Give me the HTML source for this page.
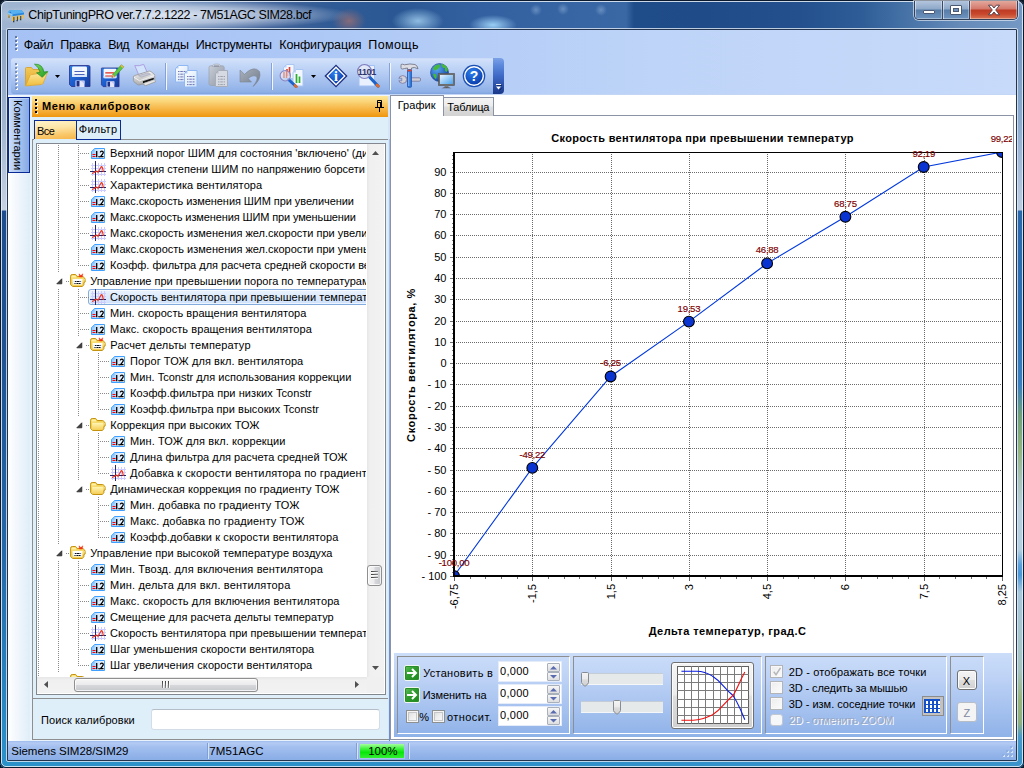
<!DOCTYPE html>
<html lang="ru"><head><meta charset="utf-8"><title>ChipTuningPRO</title>
<style>
html,body{margin:0;padding:0}
body{width:1024px;height:768px;overflow:hidden;position:relative;background:#1e4f90;font-family:"Liberation Sans",sans-serif;font-size:11px;color:#000}
div,span,svg{position:absolute;box-sizing:border-box}
.t{white-space:pre;line-height:1;display:block}
svg{overflow:visible}
svg text{font-family:"Liberation Sans",sans-serif}

</style></head>
<body>
<div style="left:0px;top:0px;width:1024px;height:768px;background:#0b1626"></div>
<div style="left:0px;top:0px;width:1024px;height:768px;border-radius:7px 7px 6px 6px;background:radial-gradient(ellipse 17px 13px at 349px 21px,rgba(190,118,104,.6),rgba(190,118,104,0) 100%),radial-gradient(ellipse 26px 13px at 418px 21px,rgba(160,205,238,.85),rgba(160,205,238,0) 100%),radial-gradient(ellipse 24px 10px at 493px 25px,rgba(160,212,250,.95),rgba(160,212,250,0) 100%),radial-gradient(circle 6px at 536px 10px,rgba(140,175,215,.55),rgba(140,175,215,0) 100%),radial-gradient(circle 6px at 563px 9px,rgba(140,175,215,.55),rgba(140,175,215,0) 100%),radial-gradient(circle 6px at 601px 10px,rgba(140,175,215,.55),rgba(140,175,215,0) 100%),radial-gradient(ellipse 185px 15px at 168px 15px,rgba(232,238,246,.9),rgba(222,230,242,.62) 55%,rgba(200,212,230,0) 100%),linear-gradient(90deg,#a0b5d1 0,#9ab0ce 60px,#7f9bc2 130px,#5e7fb0 200px,#48699f 260px,#3b6097 300px,#2e5a95 335px,#2b5894 400px,#3360a0 480px,#3a68a5 626px,#1f4d8a 634px,#1f4c89 700px,#24518e 800px,#2d5c96 860px,#4874a8 910px,#668bb9 960px,#7599c4 1024px)"></div>
<div style="left:0px;top:30px;width:8px;height:738px;background:linear-gradient(180deg,#8da4c4 0,#9fb3cf 90px,#c6d2e2 180px,#1d4d8e 181px,#1f5293 320px,#2368a8 520px,#2a8cc6 700px,#2b91c9 738px);border-radius:0 0 0 6px"></div>
<div style="left:1016px;top:30px;width:8px;height:738px;background:linear-gradient(180deg,#7498c2 0,#8eaccf 90px,#bccde1 180px,#2a68ac 181px,#2f74b6 300px,#3a80c0 355px,#6fa07a 385px,#92b47e 420px,#a8c4b8 450px,#b9d0dc 480px,#b4d0e0 520px,#5aa0dc 535px,#4a98d8 545px,#a8c8dc 562px,#a8c4c0 640px,#98b47c 670px,#90b080 693px,#4a9acb 707px,#2f8fc8 738px);border-radius:0 0 6px 0"></div>
<div style="left:0px;top:760px;width:1024px;height:8px;background:linear-gradient(90deg,#2b91c9 0,#2d8fc8 400px,#3a93cb 1024px);border-radius:0 0 6px 6px"></div>
<div style="left:0px;top:0px;width:1024px;height:768px;border:1px solid #0b1a2f;border-radius:7px 7px 6px 6px"></div>
<div style="left:1px;top:1px;width:1022px;height:766px;border:1px solid rgba(232,240,248,.85);border-radius:6px 6px 5px 5px"></div>
<div style="left:6px;top:28px;width:1012px;height:734px;border:1px solid rgba(225,234,245,.8);border-radius:2px"></div>
<div style="left:7px;top:29px;width:1010px;height:732px;border:1px solid #22344e;border-radius:1px;background:#a9c4f5"></div>
<svg style="left:4px;top:4px" width="24" height="22" viewBox="4 4 24 22"><path d="M13.700 17v5.300M17.200 16.500v4.700M20.600 16v4.200" stroke="#2e3436" stroke-width="1.300"/><path d="M8.500 14v3.800M12.700 16v5M16.100 15.500v4.500M19.500 15v4.300M23.100 14.400v4" stroke="#f4be3e" stroke-width="1.500"/><path d="M9 15.500v2.500" stroke="#50503a" stroke-width=".8"/><path d="M7.900 12.300 L9.800 10.300 Q10 10.100 10.500 10.100 L20.800 10.100 Q21.300 10.100 21.700 10.500 L24 12.700 L24 14.600 L12.400 16.200 L7.900 14.100Z" fill="#2a86dc"/><path d="M7.900 12.300 L9.800 10.300 Q10 10.100 10.500 10.100 L20.800 10.100 Q21.300 10.100 21.700 10.500 L24 12.700 L12.600 14.300Z" fill="#58b0ee"/><path d="M7.900 12.300 L12.600 14.300 L12.400 16.200 L7.900 14.100Z" fill="#8ccaf4"/><ellipse cx="10.400" cy="12.300" rx=".8" ry=".5" fill="#1264d0"/></svg>
<span class="t" style="left:28.30px;top:9.00px;font-size:12.5px;letter-spacing:-0.410px;">ChipTuningPRO ver.7.7.2.1222 - 7M51AGC SIM28.bcf</span>
<div style="left:914px;top:1px;width:104px;height:19px;border:1px solid #31415c;border-top:none;border-radius:0 0 5px 5px;overflow:hidden;box-shadow:0 0 0 1px rgba(255,255,255,.55)"><div style="left:0;top:0;width:28px;height:18px;background:linear-gradient(180deg,#b3c5dd 0,#8ea8c8 8px,#577ca8 9px,#6e94bf 18px);border-right:1px solid #384a66;box-shadow:inset 1px 0 0 rgba(255,255,255,.5),inset -1px -1px 0 rgba(255,255,255,.35)"></div><div style="left:28px;top:0;width:27px;height:18px;background:linear-gradient(180deg,#b3c5dd 0,#8ea8c8 8px,#577ca8 9px,#6e94bf 18px);border-right:1px solid #384a66;box-shadow:inset 1px 0 0 rgba(255,255,255,.5),inset -1px -1px 0 rgba(255,255,255,.35)"></div><div style="left:55px;top:0;width:47px;height:18px;background:linear-gradient(180deg,#e3a89d 0,#d4786a 8px,#bd3a24 9px,#c8472c 13px,#d97555 18px);box-shadow:inset 1px 0 0 rgba(255,255,255,.45),inset -1px -1px 0 rgba(255,255,255,.35)"></div></div>
<div style="left:923px;top:10px;width:12px;height:4px;background:#fff;border:1px solid #4b5a72;border-radius:1px"></div>
<div style="left:950px;top:5px;width:12px;height:10px;border:1px solid #4b5a72;border-radius:1px;background:#fff"></div>
<div style="left:953px;top:8px;width:6px;height:4px;border:1px solid #4b5a72;background:#6f90b9"></div>
<svg style="left:987px;top:4px" width="14" height="12" viewBox="0 0 14 12"><path d="M1.500 1.200h3.200L7 4l2.300-2.800h3.200L8.700 6l3.800 4.800H9.300L7 8 4.700 10.800H1.500L5.300 6Z" fill="#fff" stroke="#4a3a44" stroke-width=".9"/></svg>
<div style="left:8px;top:30px;width:1008px;height:66px;background:linear-gradient(90deg,#a6c2f5 0,#adc8f6 300px,#bed4f8 650px,#c7dafa 1008px)"></div>
<div style="left:15px;top:36px;width:4px;height:17px;"><div style="left:1px;top:1px;width:2px;height:2px;background:#fff"></div><div style="left:0;top:0px;width:2px;height:2px;background:#6078a8"></div><div style="left:1px;top:5px;width:2px;height:2px;background:#fff"></div><div style="left:0;top:4px;width:2px;height:2px;background:#6078a8"></div><div style="left:1px;top:9px;width:2px;height:2px;background:#fff"></div><div style="left:0;top:8px;width:2px;height:2px;background:#6078a8"></div><div style="left:1px;top:13px;width:2px;height:2px;background:#fff"></div><div style="left:0;top:12px;width:2px;height:2px;background:#6078a8"></div></div>
<span class="t" style="left:23.80px;top:39.00px;font-size:12.5px;letter-spacing:-0.345px;">Файл</span>
<span class="t" style="left:60.30px;top:39.00px;font-size:12.5px;letter-spacing:-0.307px;">Правка</span>
<span class="t" style="left:108.30px;top:39.00px;font-size:12.5px;letter-spacing:-0.713px;">Вид</span>
<span class="t" style="left:136.30px;top:39.00px;font-size:12.5px;letter-spacing:-0.045px;">Команды</span>
<span class="t" style="left:195.80px;top:39.00px;font-size:12.5px;letter-spacing:-0.175px;">Инструменты</span>
<span class="t" style="left:279.30px;top:39.00px;font-size:12.5px;letter-spacing:-0.154px;">Конфигурация</span>
<span class="t" style="left:368.30px;top:39.00px;font-size:12.5px;letter-spacing:0.384px;">Помощь</span>
<div style="left:8px;top:741px;width:1008px;height:19px;background:linear-gradient(180deg,#9dbbee 0,#b4cbf3 2px,#a3bfef 6px,#89ade6 19px)"></div>
<span class="t" style="left:11.30px;top:746.00px;font-size:11.5px;letter-spacing:-0.023px;">Siemens SIM28/SIM29</span>
<span class="t" style="left:209.30px;top:746.00px;font-size:11.5px;letter-spacing:0.085px;">7M51AGC</span>
<div style="left:207px;top:743px;width:1px;height:16px;background:#7f9fd6;box-shadow:1px 0 0 #d6e4fa"></div>
<div style="left:356px;top:743px;width:1px;height:16px;background:#7f9fd6;box-shadow:1px 0 0 #d6e4fa"></div>
<div style="left:359px;top:743px;width:46px;height:16px;background:linear-gradient(180deg,#a4ff9e 0,#3cf23a 35%,#08e608 60%,#34ee34 100%);border:1px solid #a8c2ec"></div>
<span class="t" style="left:368.30px;top:746.00px;font-size:11.5px;letter-spacing:-0.074px;">100%</span>
<div style="left:408px;top:743px;width:1px;height:16px;background:#7f9fd6;box-shadow:1px 0 0 #d6e4fa"></div>
<div style="left:1002px;top:746px;width:12px;height:12px;"><div style="left:9px;top:1px;width:2px;height:2px;background:#d6e4fa"></div><div style="left:8px;top:0px;width:2px;height:2px;background:#8eaee2"></div><div style="left:5px;top:5px;width:2px;height:2px;background:#d6e4fa"></div><div style="left:4px;top:4px;width:2px;height:2px;background:#8eaee2"></div><div style="left:9px;top:5px;width:2px;height:2px;background:#d6e4fa"></div><div style="left:8px;top:4px;width:2px;height:2px;background:#8eaee2"></div><div style="left:1px;top:9px;width:2px;height:2px;background:#d6e4fa"></div><div style="left:0px;top:8px;width:2px;height:2px;background:#8eaee2"></div><div style="left:5px;top:9px;width:2px;height:2px;background:#d6e4fa"></div><div style="left:4px;top:8px;width:2px;height:2px;background:#8eaee2"></div><div style="left:9px;top:9px;width:2px;height:2px;background:#d6e4fa"></div><div style="left:8px;top:8px;width:2px;height:2px;background:#8eaee2"></div></div>
<div style="left:11px;top:58px;width:482px;height:36px;border-radius:3px 0 0 3px;background:linear-gradient(180deg,#c3d6f7 0,#d3e1fa 1px,#c6d9f8 6px,#b2caf2 17px,#9dbbec 27px,#8eb0e8 34px,#7fa2dd 36px)"></div>
<div style="left:493px;top:58px;width:11px;height:36px;border-radius:0 4px 4px 0;background:linear-gradient(180deg,#7ba1e6 0,#5a86da 8px,#3f69c6 18px,#26499f 30px,#1c3a8c 35px)"></div>
<svg style="left:495px;top:83px" width="8" height="8" viewBox="0 0 8 8"><path d="M1 1.500h5" stroke="#fff" stroke-width="1"/><path d="M1 3.500h5L3.500 6.500Z" fill="#fff"/><path d="M2 2.500h5M7 4.500L4.500 7.500" stroke="#0a1a50" stroke-width="1" fill="none" opacity=".7"/></svg>
<div style="left:15px;top:63px;width:4px;height:28px;"><div style="left:1px;top:1px;width:2px;height:2px;background:#fff"></div><div style="left:0;top:0px;width:2px;height:2px;background:#7a90c0"></div><div style="left:1px;top:5px;width:2px;height:2px;background:#fff"></div><div style="left:0;top:4px;width:2px;height:2px;background:#7a90c0"></div><div style="left:1px;top:9px;width:2px;height:2px;background:#fff"></div><div style="left:0;top:8px;width:2px;height:2px;background:#7a90c0"></div><div style="left:1px;top:13px;width:2px;height:2px;background:#fff"></div><div style="left:0;top:12px;width:2px;height:2px;background:#7a90c0"></div><div style="left:1px;top:17px;width:2px;height:2px;background:#fff"></div><div style="left:0;top:16px;width:2px;height:2px;background:#7a90c0"></div><div style="left:1px;top:21px;width:2px;height:2px;background:#fff"></div><div style="left:0;top:20px;width:2px;height:2px;background:#7a90c0"></div><div style="left:1px;top:25px;width:2px;height:2px;background:#fff"></div><div style="left:0;top:24px;width:2px;height:2px;background:#7a90c0"></div></div>
<div style="left:165px;top:63px;width:1px;height:27px;background:#86a1d2"></div>
<div style="left:166px;top:63px;width:1px;height:27px;background:#f4f8fe"></div>
<div style="left:271px;top:63px;width:1px;height:27px;background:#86a1d2"></div>
<div style="left:272px;top:63px;width:1px;height:27px;background:#f4f8fe"></div>
<div style="left:389px;top:63px;width:1px;height:27px;background:#86a1d2"></div>
<div style="left:390px;top:63px;width:1px;height:27px;background:#f4f8fe"></div>
<svg style="left:55px;top:75px" width="5" height="3" viewBox="0 0 5 3"><path d="M0 0h5L2.500 3Z" fill="#000"/></svg>
<svg style="left:311px;top:75px" width="5" height="3" viewBox="0 0 5 3"><path d="M0 0h5L2.500 3Z" fill="#000"/></svg>
<svg width="0" height="0" style="left:0;top:0"><defs><linearGradient id="gFold" x1="0" y1="0" x2="0" y2="1"><stop offset="0" stop-color="#fdeaa0"/><stop offset="1" stop-color="#f0bc3c"/></linearGradient><linearGradient id="gFoldB" x1="0" y1="0" x2="0" y2="1"><stop offset="0" stop-color="#f3c958"/><stop offset="1" stop-color="#e2a62a"/></linearGradient><linearGradient id="gGreen" x1="0" y1="0" x2="1" y2="1"><stop offset="0" stop-color="#7ada5a"/><stop offset="1" stop-color="#1c9a22"/></linearGradient><linearGradient id="gFlop" x1="0" y1="0" x2="1" y2="1"><stop offset="0" stop-color="#2f7fe6"/><stop offset=".5" stop-color="#1c5ccc"/><stop offset="1" stop-color="#173a96"/></linearGradient><linearGradient id="gPrn" x1="0" y1="0" x2="0" y2="1"><stop offset="0" stop-color="#f4f4f4"/><stop offset="1" stop-color="#a9a9a9"/></linearGradient><linearGradient id="gGray" x1="0" y1="0" x2="1" y2="1"><stop offset="0" stop-color="#c9ced6"/><stop offset="1" stop-color="#8f98a6"/></linearGradient><linearGradient id="gDoc" x1="0" y1="0" x2="1" y2="1"><stop offset="0" stop-color="#ffffff"/><stop offset="1" stop-color="#cfe2fb"/></linearGradient><radialGradient id="gInfo" cx=".4" cy=".3" r=".8"><stop offset="0" stop-color="#2f80ee"/><stop offset="1" stop-color="#0636a6"/></radialGradient><radialGradient id="gGlobe" cx=".35" cy=".3" r=".8"><stop offset="0" stop-color="#5aa8f4"/><stop offset="1" stop-color="#0c3c9a"/></radialGradient><linearGradient id="gMon" x1="0" y1="0" x2="1" y2="1"><stop offset="0" stop-color="#e8f4ff"/><stop offset="1" stop-color="#4aa2ee"/></linearGradient><linearGradient id="gLens" x1="0" y1="0" x2="1" y2="1"><stop offset="0" stop-color="#f4f8ff" stop-opacity=".85"/><stop offset="1" stop-color="#b8c8e8" stop-opacity=".7"/></linearGradient><linearGradient id="gBtn" x1="0" y1="0" x2="0" y2="1"><stop offset="0" stop-color="#f4f4f4"/><stop offset=".48" stop-color="#ebebeb"/><stop offset=".52" stop-color="#dcdcdc"/><stop offset="1" stop-color="#cfcfcf"/></linearGradient><linearGradient id="gN" x1="0" y1="0" x2="1" y2="0"><stop offset="0" stop-color="#8cc6ff"/><stop offset=".5" stop-color="#d4eaff"/><stop offset="1" stop-color="#f4faff"/></linearGradient><linearGradient id="gGray2" x1="0" y1="0" x2="1" y2="1"><stop offset="0" stop-color="#a9b1bd"/><stop offset="1" stop-color="#707a88"/></linearGradient><linearGradient id="gFold2" x1="0" y1="0" x2="0" y2="1"><stop offset="0" stop-color="#fff6b8"/><stop offset="1" stop-color="#f6cf5a"/></linearGradient></defs></svg>
<svg style="left:24px;top:63px" width="25" height="25" viewBox="0 0 25 25"><path d="M1.500 5.500 Q1.500 4.500 2.500 4.500 L7.500 4.500 L9 6.500 L16 6.500 L16 20 L1.500 22.500Z" fill="url(#gFoldB)" stroke="#d49c24" stroke-width=".8"/><path d="M1.500 23 L6 12.500 Q6.400 11.800 7.500 11.600 L23.500 9.200 L19 20.500 Q18.700 21.300 17.500 21.500 Z" fill="url(#gFold)" stroke="#dca832" stroke-width=".8"/><path d="M10.500 1.200 Q18.500 0.500 19.800 9 L23.800 8.600 L18.300 14.300 L12.600 9.800 L16.200 9.400 Q15 4.200 10.500 1.200Z" fill="url(#gGreen)" stroke="#1c8a20" stroke-width=".7"/></svg>
<svg style="left:69px;top:65px" width="22" height="23" viewBox="0 0 22 23"><path d="M1 .5 H19.500 Q21 .5 21 2 V21.500 H2.500 L.5 19.500 V1 Q.5 .5 1 .5Z" fill="url(#gFlop)" stroke="#2a2f86" stroke-width=".8"/><rect x="3" y="1.500" width="15" height="10.500" rx="1.200" fill="#f2f7ff"/><rect x="3" y="9.500" width="15" height="2.500" fill="#d5e4fb"/><path d="M5.500 6.500h10M5.500 9.500h10" stroke="#4a63b8" stroke-width="1"/><rect x="6.500" y="15.500" width="9" height="6.500" fill="#e4e6fa"/><rect x="7.500" y="16" width="3" height="5.500" fill="#1d2f86"/><path d="M12 16h3.500v3Z" fill="#c0c4f0"/></svg>
<svg style="left:101px;top:64px" width="24" height="24" viewBox="0 0 24 24"><g transform="translate(0,3.500) scale(.86,.89)"><path d="M1 .5 H19.500 Q21 .5 21 2 V21.500 H2.500 L.5 19.500 V1 Q.5 .5 1 .5Z" fill="url(#gFlop)" stroke="#2a2f86" stroke-width=".8"/><rect x="3" y="1.500" width="15" height="10.500" rx="1.200" fill="#f2f7ff"/><rect x="3" y="9.500" width="15" height="2.500" fill="#d5e4fb"/><path d="M5 6h10M5 9.500h10" stroke="#e02a1a" stroke-width="1.300"/><rect x="6.500" y="15.500" width="9" height="6.500" fill="#e4e6fa"/><rect x="7.500" y="16" width="3" height="5.500" fill="#1d2f86"/><path d="M12 16h3.500v3Z" fill="#c0c4f0"/></g><path d="M20.300 .8 L22.800 2.800 L14 12.600 L11.600 10.600Z" fill="#5cc840" stroke="#2c8a22" stroke-width=".5"/><path d="M20.300 .8 L22.800 2.800 L21.900 3.900 L19.400 1.900Z" fill="#f2b444"/><path d="M14 12.600 L11.600 10.600 L10.800 13.600Z" fill="#f2c27a" stroke="#b07a30" stroke-width=".4"/><path d="M10.800 13.600l.3-1.200 .9 .7Z" fill="#222"/></svg>
<svg style="left:133px;top:64px" width="24" height="23" viewBox="0 0 24 23"><path d="M1.800 1.600 Q6 2.400 10.700 .4 L14.200 8.500 L5.600 10.600Z" fill="#d2e3fc" stroke="#a999dc" stroke-width=".9"/><path d="M.4 13 Q.3 12 1.500 11.600 L15.800 7.200 Q17 6.900 18 7.600 L21 10 Q21.700 10.600 21.700 11.500 V16.500 L22.800 17.600 L12.500 21.700 L10 19.900 L6.200 21 Q5.400 21.200 4.600 20.600 L1 17.800 Q.4 17.300 .4 16.500Z" fill="url(#gPrn)" stroke="#8e8e8e" stroke-width=".7"/><path d="M5.500 11.600 L15 8.700 L17.500 10.300 L8.300 13.300Z" fill="#c4c6d4" stroke="#9a9aae" stroke-width=".5"/><path d="M1 13.200 L6.500 16.800 L21.300 11.600" fill="none" stroke="#fafafa" stroke-width=".8"/><path d="M9.800 17.200 L20.800 13.700 V15.400 L10 19.300Z" fill="#151515"/><path d="M10.200 19.600 L21.300 15.800 L22.600 17.500 L12.500 21.400Z" fill="#e9e9e9" stroke="#9a9a9a" stroke-width=".4"/></svg>
<svg style="left:175px;top:65px" width="23" height="23" viewBox="0 0 23 23"><path d="M3.5 0.5 H13.0 V17.0 H0.5 V3.5Z" fill="url(#gDoc)" stroke="#8fb8f2" stroke-width="1"/><path d="M0.5 3.5 L3.5 0.5 V3.5Z" fill="#8fb8f2" opacity=".7"/><path d="M3.0 6.5h7.5" stroke="#4a4f9a" stroke-width=".9" stroke-dasharray="1.500 .8 2.500 .8 2 .8" opacity=".85"/><path d="M3.0 9.2h7.5" stroke="#4a4f9a" stroke-width=".9" stroke-dasharray="1.500 .8 2.500 .8 2 .8" opacity=".85"/><path d="M3.0 11.9h7.5" stroke="#4a4f9a" stroke-width=".9" stroke-dasharray="1.500 .8 2.500 .8 2 .8" opacity=".85"/><path d="M3.0 14.600000000000001h7.5" stroke="#4a4f9a" stroke-width=".9" stroke-dasharray="1.500 .8 2.500 .8 2 .8" opacity=".85"/><path d="M12.5 5.5 H22.0 V22.0 H9.5 V8.5Z" fill="url(#gDoc)" stroke="#8fb8f2" stroke-width="1"/><path d="M9.5 8.5 L12.5 5.5 V8.5Z" fill="#8fb8f2" opacity=".7"/><path d="M12.0 11.5h7.5" stroke="#4a4f9a" stroke-width=".9" stroke-dasharray="1.500 .8 2.500 .8 2 .8" opacity=".85"/><path d="M12.0 14.2h7.5" stroke="#4a4f9a" stroke-width=".9" stroke-dasharray="1.500 .8 2.500 .8 2 .8" opacity=".85"/><path d="M12.0 16.9h7.5" stroke="#4a4f9a" stroke-width=".9" stroke-dasharray="1.500 .8 2.500 .8 2 .8" opacity=".85"/><path d="M12.0 19.6h7.5" stroke="#4a4f9a" stroke-width=".9" stroke-dasharray="1.500 .8 2.500 .8 2 .8" opacity=".85"/></svg>
<svg style="left:208px;top:63px" width="21" height="25" viewBox="0 0 21 25"><path d="M1 4.500 Q1 2.800 2.800 2.800 H14.500 Q16.200 2.800 16.200 4.500 V20.500 Q16.200 22.500 14.500 22.500 H2.800 Q1 22.500 1 20.500Z" fill="url(#gGray)" stroke="#9aa2b0" stroke-width=".7"/><path d="M4.500 3.500 Q4.500 1 8.600 1 Q12.700 1 12.700 3.500Z" fill="#d4d8e0" stroke="#9aa2b0" stroke-width=".6"/><path d="M6 3h5.200" stroke="#7c8494" stroke-width="1"/><path d="M10.5 7.5 H19.5 V23.5 H7.5 V10.5Z" fill="#d6dae2" stroke="#a8aeb9" stroke-width="1"/><path d="M7.5 10.5 L10.5 7.5 V10.5Z" fill="#a8aeb9" opacity=".7"/><path d="M10.0 13.5h7" stroke="#8a909c" stroke-width=".9" stroke-dasharray="1.500 .8 2.500 .8 2 .8" opacity=".85"/><path d="M10.0 16.2h7" stroke="#8a909c" stroke-width=".9" stroke-dasharray="1.500 .8 2.500 .8 2 .8" opacity=".85"/><path d="M10.0 18.9h7" stroke="#8a909c" stroke-width=".9" stroke-dasharray="1.500 .8 2.500 .8 2 .8" opacity=".85"/><path d="M10.0 21.6h7" stroke="#8a909c" stroke-width=".9" stroke-dasharray="1.500 .8 2.500 .8 2 .8" opacity=".85"/></svg>
<svg style="left:239px;top:66px" width="23" height="22" viewBox="0 0 23 22"><path d="M1 4 L1 16 L12.500 16 L9.200 12.600 Q13.500 8.500 17.500 10.500 Q19.500 13.500 14 20.500 Q23 13 20.500 5.500 Q15 -1 5.500 8.300Z" fill="url(#gGray2)" stroke="#7d8794" stroke-width=".6"/></svg>
<svg style="left:279px;top:63px" width="26" height="26" viewBox="0 0 26 26"><path d="M7.5 1.5 H15.0 V15.5 H4.5 V4.5Z" fill="#f1f6ff" stroke="#a9c6f2" stroke-width="1"/><path d="M4.5 4.5 L7.5 1.5 V4.5Z" fill="#a9c6f2" opacity=".7"/><path d="M7.0 7.5h5.5" stroke="#f1f6ff" stroke-width=".9" stroke-dasharray="1.500 .8 2.500 .8 2 .8" opacity=".85"/><path d="M7.0 10.2h5.5" stroke="#f1f6ff" stroke-width=".9" stroke-dasharray="1.500 .8 2.500 .8 2 .8" opacity=".85"/><path d="M7.0 12.9h5.5" stroke="#f1f6ff" stroke-width=".9" stroke-dasharray="1.500 .8 2.500 .8 2 .8" opacity=".85"/><path d="M8 6v7M10.500 4v9" stroke="#e0402a" stroke-width="1.600"/><path d="M17 6.5 H24 V23.0 H14 V9.5Z" fill="#f1f6ff" stroke="#a9c6f2" stroke-width="1"/><path d="M14 9.5 L17 6.5 V9.5Z" fill="#a9c6f2" opacity=".7"/><path d="M16.5 12.5h5" stroke="#f1f6ff" stroke-width=".9" stroke-dasharray="1.500 .8 2.500 .8 2 .8" opacity=".85"/><path d="M16.5 15.2h5" stroke="#f1f6ff" stroke-width=".9" stroke-dasharray="1.500 .8 2.500 .8 2 .8" opacity=".85"/><path d="M16.5 17.9h5" stroke="#f1f6ff" stroke-width=".9" stroke-dasharray="1.500 .8 2.500 .8 2 .8" opacity=".85"/><path d="M16.5 20.6h5" stroke="#f1f6ff" stroke-width=".9" stroke-dasharray="1.500 .8 2.500 .8 2 .8" opacity=".85"/><path d="M17.500 11v9M20.500 13.500v6.500" stroke="#2fae2c" stroke-width="1.700"/><path d="M9.500 16.500 L17 23.500" stroke="#1c62c8" stroke-width="3" stroke-linecap="round"/><path d="M16 22.500 L17.300 23.700" stroke="#e06a2a" stroke-width="2.600" stroke-linecap="round"/><circle cx="6.300" cy="12.800" r="5.200" fill="url(#gLens)" stroke="#8a86c4" stroke-width="1.100"/><path d="M5 9v6M7.500 8v7" stroke="#e0705a" stroke-width="1.500" opacity=".7"/></svg>
<svg style="left:324px;top:64px" width="24" height="24" viewBox="0 0 24 24"><path d="M12 .4 L23.600 12 L12 23.600 L.4 12Z" fill="#1b2f86"/><path d="M12 2.300 L21.700 12 L12 21.700 L2.300 12Z" fill="#fff"/><path d="M12 4.200 L19.800 12 L12 19.800 L4.200 12Z" fill="url(#gInfo)"/><text x="12" y="17" font-size="14" font-weight="bold" style="font-family:Liberation Serif,serif" fill="#fff" text-anchor="middle">i</text></svg>
<svg style="left:356px;top:63px" width="26" height="26" viewBox="0 0 26 26"><path d="M6 2.5 H18.5 V23.0 H3 V5.5Z" fill="#e9f1fe" stroke="#a2c0f2" stroke-width="1"/><path d="M3 5.5 L6 2.5 V5.5Z" fill="#a2c0f2" opacity=".7"/><path d="M5.5 8.5h10.5" stroke="#e9f1fe" stroke-width=".9" stroke-dasharray="1.500 .8 2.500 .8 2 .8" opacity=".85"/><path d="M5.5 11.2h10.5" stroke="#e9f1fe" stroke-width=".9" stroke-dasharray="1.500 .8 2.500 .8 2 .8" opacity=".85"/><path d="M5.5 13.9h10.5" stroke="#e9f1fe" stroke-width=".9" stroke-dasharray="1.500 .8 2.500 .8 2 .8" opacity=".85"/><path d="M5.5 16.6h10.5" stroke="#e9f1fe" stroke-width=".9" stroke-dasharray="1.500 .8 2.500 .8 2 .8" opacity=".85"/><path d="M13.500 14 L22 23" stroke="#1c62c8" stroke-width="3.200" stroke-linecap="round"/><path d="M21 22 L22.300 23.300" stroke="#e06a2a" stroke-width="2.800" stroke-linecap="round"/><circle cx="8.500" cy="8.500" r="7" fill="url(#gLens)" stroke="#7f7cbc" stroke-width="1.200"/><text x="1.800" y="12" font-size="9" font-weight="bold" fill="#30346c" textLength="18.500" lengthAdjust="spacing">1101</text></svg>
<svg style="left:398px;top:63px" width="24" height="26" viewBox="0 0 24 26"><rect x="6" y="14.800" width="16.500" height="3.400" rx="1.200" fill="#cdcdd6" stroke="#75729c" stroke-width=".8"/><circle cx="4.700" cy="16.500" r="3.900" fill="#d2d2da" stroke="#75729c" stroke-width=".8"/><rect x="-.5" y="15.200" width="4.300" height="2.600" fill="#a8c2ee"/><path d="M.6 15.200H3.800V17.800H.6" fill="none" stroke="#75729c" stroke-width=".7"/><path d="M3 2.500 Q2.500 1 4.500 1.200 L6.500 1.800 Q12 .3 17 1.500 Q19.500 2.500 20 5.800 Q16 3.500 13.500 5 V6.800 H9.500 V5 L6.500 5.500 L4.500 6 Q2.800 6 3 4.500Z" fill="#dcdce4" stroke="#6c6c7c" stroke-width=".8"/><rect x="9.500" y="6.800" width="4" height="17.500" rx=".8" fill="#2f78dc" stroke="#1a4aa0" stroke-width=".7"/><rect x="9.500" y="6.800" width="4" height="1.600" fill="#e2452c"/><path d="M10.800 9v14" stroke="#8cc0ff" stroke-width="1"/></svg>
<svg style="left:430px;top:63px" width="25" height="26" viewBox="0 0 25 26"><circle cx="9.500" cy="9.500" r="9" fill="url(#gGlobe)" stroke="#1a3c8c" stroke-width=".6"/><path d="M3 5 Q5 2 9 1.200 Q11 3 9 5 Q7.500 6.500 5 7.500 Q3.500 7 3 5ZM11 1 Q15 1 17.500 5 Q18.500 8 16 9 Q14 7 15 5 Q13 5.500 12 3.500ZM3 11 Q5 10 6.500 12 Q7 15 5.500 16 Q3.500 14 3 11Z" fill="#46b83a"/><rect x="8.500" y="10.500" width="16" height="12" fill="#6e6e6e" stroke="#505050" stroke-width=".6"/><rect x="10" y="12" width="13" height="9" fill="url(#gMon)"/><path d="M14.500 22.500h4v1.500h-4Z" fill="#7a7a7a"/><path d="M11.500 25.200 Q16.500 23 21.500 25.200Z" fill="#5a5a5a"/></svg>
<svg style="left:462px;top:64px" width="24" height="24" viewBox="0 0 24 24"><circle cx="12" cy="12" r="11.300" fill="#1a4fb4"/><circle cx="12" cy="12" r="10" fill="#fff"/><circle cx="12" cy="12" r="8.600" fill="url(#gInfo)"/><text x="12" y="17" font-size="14" font-weight="bold" fill="#fff" text-anchor="middle">?</text></svg>
<div style="left:8px;top:96px;width:24px;height:645px;background:linear-gradient(90deg,#ffffff 0,#f3f8fd 8px,#deedf8 23px,#cddcf8 24px)"></div>
<div style="left:8px;top:95px;width:382px;height:1px;background:#f0f6fe"></div>
<div style="left:390px;top:94px;width:626px;height:1px;background:#c3d6f6"></div>
<div style="left:8px;top:97px;width:22px;height:76px;border:1px solid #0a2a96;background:linear-gradient(90deg,#cadcf8 0,#a9c5f0 10px,#86aae4 20px);box-shadow:inset 1px 1px 0 rgba(255,255,255,.35)"></div>
<div style="left:22px;top:100px;width:0;height:0;transform:rotate(90deg);transform-origin:0 0"><span class="t" style="left:0.00px;top:-1.00px;font-size:11px;letter-spacing:0.090px;">Комментарии</span></div>
<div style="left:30px;top:96px;width:2px;height:645px;background:#e8f2fc"></div>
<div style="left:32px;top:96px;width:358px;height:645px;background:#dfeffa"></div>
<div style="left:32px;top:96px;width:356px;height:21px;background:linear-gradient(180deg,#fde89a 0,#fbd77c 5px,#f7bd52 11px,#f3a62a 17px,#f0960e 21px)"></div>
<div style="left:35px;top:99px;width:4px;height:16px;"><div style="left:1px;top:1px;width:2px;height:2px;background:#fff6d8"></div><div style="left:0;top:0px;width:2px;height:2px;background:#000"></div><div style="left:1px;top:5px;width:2px;height:2px;background:#fff6d8"></div><div style="left:0;top:4px;width:2px;height:2px;background:#000"></div><div style="left:1px;top:9px;width:2px;height:2px;background:#fff6d8"></div><div style="left:0;top:8px;width:2px;height:2px;background:#000"></div><div style="left:1px;top:13px;width:2px;height:2px;background:#fff6d8"></div><div style="left:0;top:12px;width:2px;height:2px;background:#000"></div></div>
<span class="t" style="left:42.00px;top:101.00px;font-size:11px;font-weight:bold;letter-spacing:0.634px;">Меню калибровок</span>
<svg style="left:374px;top:99px" width="12" height="14" viewBox="0 0 12 14"><path d="M3.500 8V1.500h4V8M3.500 3.500h4M6.500 4v4M1 8.500h9M5.500 9v4" fill="none" stroke="#000" stroke-width="1"/></svg>
<div style="left:34px;top:120px;width:43px;height:19px;border:1px solid #0a2a96;border-bottom:none;background:linear-gradient(175deg,#fff4cc 0,#fde4a4 40%,#f9c768 75%,#f7b64c 100%)"></div>
<span class="t" style="left:36.90px;top:126.00px;font-size:11px;letter-spacing:-0.534px;">Все</span>
<div style="left:76px;top:120px;width:45px;height:20px;border:1px solid #0a2a96;background:#dfeffa"></div>
<span class="t" style="left:78.80px;top:124.00px;font-size:11px;letter-spacing:0.249px;">Фильтр</span>
<div style="left:32px;top:139px;width:357px;height:560px;border:1px solid #8e8e8e;border-top:none"></div>
<div style="left:32px;top:139px;width:2px;height:1px;background:#8e8e8e"></div>
<div style="left:121px;top:139px;width:268px;height:1px;background:#8e8e8e"></div>
<div style="left:388px;top:96px;width:2px;height:645px;background:#d6e5f8"></div>
<div style="left:32px;top:699px;width:1px;height:41px;background:#8e8e8e"></div>
<div style="left:32px;top:739px;width:358px;height:1px;background:#8e8e8e"></div>
<div style="left:32px;top:740px;width:358px;height:1px;background:#e8f2fc"></div>
<div style="left:36px;top:143px;width:350px;height:552px;border:1px solid #828790;background:#fff"></div>
<div style="left:37px;top:144px;width:329px;height:533px;overflow:hidden"><div style="left:-37px;top:-144px;width:1024px;height:768px"><div style="left:38px;top:145px;width:1px;height:548px;background:repeating-linear-gradient(180deg,#8a8a8a 0 1px,transparent 1px 2px)"></div><div style="left:58px;top:145px;width:1px;height:128px;background:repeating-linear-gradient(180deg,#8a8a8a 0 1px,transparent 1px 2px)"></div><div style="left:58px;top:289px;width:1px;height:256px;background:repeating-linear-gradient(180deg,#8a8a8a 0 1px,transparent 1px 2px)"></div><div style="left:58px;top:561px;width:1px;height:112px;background:repeating-linear-gradient(180deg,#8a8a8a 0 1px,transparent 1px 2px)"></div><div style="left:78px;top:145px;width:1px;height:121px;background:repeating-linear-gradient(180deg,#8a8a8a 0 1px,transparent 1px 2px)"></div><div style="left:78px;top:289px;width:1px;height:48px;background:repeating-linear-gradient(180deg,#8a8a8a 0 1px,transparent 1px 2px)"></div><div style="left:78px;top:353px;width:1px;height:64px;background:repeating-linear-gradient(180deg,#8a8a8a 0 1px,transparent 1px 2px)"></div><div style="left:78px;top:433px;width:1px;height:48px;background:repeating-linear-gradient(180deg,#8a8a8a 0 1px,transparent 1px 2px)"></div><div style="left:78px;top:561px;width:1px;height:105px;background:repeating-linear-gradient(180deg,#8a8a8a 0 1px,transparent 1px 2px)"></div><div style="left:98px;top:353px;width:1px;height:57px;background:repeating-linear-gradient(180deg,#8a8a8a 0 1px,transparent 1px 2px)"></div><div style="left:98px;top:433px;width:1px;height:41px;background:repeating-linear-gradient(180deg,#8a8a8a 0 1px,transparent 1px 2px)"></div><div style="left:98px;top:497px;width:1px;height:41px;background:repeating-linear-gradient(180deg,#8a8a8a 0 1px,transparent 1px 2px)"></div><div style="left:88px;top:289px;width:300px;height:16px;border:1px solid #84acdd;border-radius:3px;background:linear-gradient(180deg,#eaf3fe 0,#cfe2fc 100%);box-shadow:inset 0 0 0 1px rgba(255,255,255,.6)"></div><div style="left:80px;top:153px;width:10px;height:1px;background:repeating-linear-gradient(90deg,#8a8a8a 0 1px,transparent 1px 2px)"></div><svg style="left:91px;top:148px" width="14" height="11" viewBox="0 0 14 11"><path d="M3.500 .5H13.500V10.500H.5V3.500Z" fill="url(#gN)" stroke="#3fa0ff" stroke-width="1"/><path d="M.5 3.500L3.500 .5V3.500Z" fill="#7cc0ff"/><rect x="1.500" y="6" width="3" height="1" fill="#f00"/><rect x="1.500" y="8" width="3" height="1" fill="#f00"/><path d="M5.700 3v6.300" stroke="#000" stroke-width="1.300"/><rect x="7.400" y="8" width="1.300" height="1.300" fill="#000"/><path d="M9.300 4.400Q9.500 3.200 10.800 3.200Q12.300 3.200 12.300 4.600Q12.300 5.600 9.500 8.700H12.600" fill="none" stroke="#000" stroke-width="1.250"/></svg><span class="t r0" style="left:110.10px;top:148.00px;font-size:11px;">Верхний порог ШИМ для состояния 'включено' (диагностика)</span><div style="left:80px;top:169px;width:10px;height:1px;background:repeating-linear-gradient(90deg,#8a8a8a 0 1px,transparent 1px 2px)"></div><svg style="left:90px;top:161px" width="16" height="16" viewBox="0 0 16 16"><path d="M2.500 2v13M5.500 2v13M8.500 2v13M11.500 2v13M14.500 2v13M1 4.500h15M1 7.500h15M1 10.500h15M1 13.500h15" stroke="#ccccff" stroke-width="1"/><path d="M5.500 0v16M0 10.500h16" stroke="#26266a" stroke-width="1"/><path d="M2 12.500Q4 12 5.500 10.500Q7 9.500 8 11.500Q9.500 9 11 6Q12 5 12.500 7L13.500 11" fill="none" stroke="#f03018" stroke-width="1.100"/></svg><span class="t r1" style="left:110.10px;top:164.00px;font-size:11px;letter-spacing:0.011px;">Коррекция степени ШИМ по напряжению борсети</span><div style="left:80px;top:185px;width:10px;height:1px;background:repeating-linear-gradient(90deg,#8a8a8a 0 1px,transparent 1px 2px)"></div><svg style="left:90px;top:177px" width="16" height="16" viewBox="0 0 16 16"><path d="M2.500 2v13M5.500 2v13M8.500 2v13M11.500 2v13M14.500 2v13M1 4.500h15M1 7.500h15M1 10.500h15M1 13.500h15" stroke="#ccccff" stroke-width="1"/><path d="M5.500 0v16M0 10.500h16" stroke="#26266a" stroke-width="1"/><path d="M2 12.500Q4 12 5.500 10.500Q7 9.500 8 11.500Q9.500 9 11 6Q12 5 12.500 7L13.500 11" fill="none" stroke="#f03018" stroke-width="1.100"/></svg><span class="t r2" style="left:110.10px;top:180.00px;font-size:11px;letter-spacing:0.101px;">Характеристика вентилятора</span><div style="left:80px;top:201px;width:10px;height:1px;background:repeating-linear-gradient(90deg,#8a8a8a 0 1px,transparent 1px 2px)"></div><svg style="left:91px;top:196px" width="14" height="11" viewBox="0 0 14 11"><path d="M3.500 .5H13.500V10.500H.5V3.500Z" fill="url(#gN)" stroke="#3fa0ff" stroke-width="1"/><path d="M.5 3.500L3.500 .5V3.500Z" fill="#7cc0ff"/><rect x="1.500" y="6" width="3" height="1" fill="#f00"/><rect x="1.500" y="8" width="3" height="1" fill="#f00"/><path d="M5.700 3v6.300" stroke="#000" stroke-width="1.300"/><rect x="7.400" y="8" width="1.300" height="1.300" fill="#000"/><path d="M9.300 4.400Q9.500 3.200 10.800 3.200Q12.300 3.200 12.300 4.600Q12.300 5.600 9.500 8.700H12.600" fill="none" stroke="#000" stroke-width="1.250"/></svg><span class="t r3" style="left:110.10px;top:196.00px;font-size:11px;letter-spacing:-0.065px;">Макс.скорость изменения ШИМ при увеличении</span><div style="left:80px;top:217px;width:10px;height:1px;background:repeating-linear-gradient(90deg,#8a8a8a 0 1px,transparent 1px 2px)"></div><svg style="left:91px;top:212px" width="14" height="11" viewBox="0 0 14 11"><path d="M3.500 .5H13.500V10.500H.5V3.500Z" fill="url(#gN)" stroke="#3fa0ff" stroke-width="1"/><path d="M.5 3.500L3.500 .5V3.500Z" fill="#7cc0ff"/><rect x="1.500" y="6" width="3" height="1" fill="#f00"/><rect x="1.500" y="8" width="3" height="1" fill="#f00"/><path d="M5.700 3v6.300" stroke="#000" stroke-width="1.300"/><rect x="7.400" y="8" width="1.300" height="1.300" fill="#000"/><path d="M9.300 4.400Q9.500 3.200 10.800 3.200Q12.300 3.200 12.300 4.600Q12.300 5.600 9.500 8.700H12.600" fill="none" stroke="#000" stroke-width="1.250"/></svg><span class="t r4" style="left:110.10px;top:212.00px;font-size:11px;letter-spacing:-0.124px;">Макс.скорость изменения ШИМ при уменьшении</span><div style="left:80px;top:233px;width:10px;height:1px;background:repeating-linear-gradient(90deg,#8a8a8a 0 1px,transparent 1px 2px)"></div><svg style="left:90px;top:225px" width="16" height="16" viewBox="0 0 16 16"><path d="M2.500 2v13M5.500 2v13M8.500 2v13M11.500 2v13M14.500 2v13M1 4.500h15M1 7.500h15M1 10.500h15M1 13.500h15" stroke="#ccccff" stroke-width="1"/><path d="M5.500 0v16M0 10.500h16" stroke="#26266a" stroke-width="1"/><path d="M2 12.500Q4 12 5.500 10.500Q7 9.500 8 11.500Q9.500 9 11 6Q12 5 12.500 7L13.500 11" fill="none" stroke="#f03018" stroke-width="1.100"/></svg><span class="t r5" style="left:110.10px;top:228.00px;font-size:11px;">Макс.скорость изменения жел.скорости при увеличении</span><div style="left:80px;top:249px;width:10px;height:1px;background:repeating-linear-gradient(90deg,#8a8a8a 0 1px,transparent 1px 2px)"></div><svg style="left:91px;top:244px" width="14" height="11" viewBox="0 0 14 11"><path d="M3.500 .5H13.500V10.500H.5V3.500Z" fill="url(#gN)" stroke="#3fa0ff" stroke-width="1"/><path d="M.5 3.500L3.500 .5V3.500Z" fill="#7cc0ff"/><rect x="1.500" y="6" width="3" height="1" fill="#f00"/><rect x="1.500" y="8" width="3" height="1" fill="#f00"/><path d="M5.700 3v6.300" stroke="#000" stroke-width="1.300"/><rect x="7.400" y="8" width="1.300" height="1.300" fill="#000"/><path d="M9.300 4.400Q9.500 3.200 10.800 3.200Q12.300 3.200 12.300 4.600Q12.300 5.600 9.500 8.700H12.600" fill="none" stroke="#000" stroke-width="1.250"/></svg><span class="t r6" style="left:110.10px;top:244.00px;font-size:11px;">Макс.скорость изменения жел.скорости при уменьшении</span><div style="left:80px;top:265px;width:10px;height:1px;background:repeating-linear-gradient(90deg,#8a8a8a 0 1px,transparent 1px 2px)"></div><svg style="left:91px;top:260px" width="14" height="11" viewBox="0 0 14 11"><path d="M3.500 .5H13.500V10.500H.5V3.500Z" fill="url(#gN)" stroke="#3fa0ff" stroke-width="1"/><path d="M.5 3.500L3.500 .5V3.500Z" fill="#7cc0ff"/><rect x="1.500" y="6" width="3" height="1" fill="#f00"/><rect x="1.500" y="8" width="3" height="1" fill="#f00"/><path d="M5.700 3v6.300" stroke="#000" stroke-width="1.300"/><rect x="7.400" y="8" width="1.300" height="1.300" fill="#000"/><path d="M9.300 4.400Q9.500 3.200 10.800 3.200Q12.300 3.200 12.300 4.600Q12.300 5.600 9.500 8.700H12.600" fill="none" stroke="#000" stroke-width="1.250"/></svg><span class="t r7" style="left:110.10px;top:260.00px;font-size:11px;">Коэфф. фильтра для расчета средней скорости вентилятора</span><svg style="left:56px;top:278px" width="7" height="7" viewBox="0 0 7 7"><path d="M5.800 .8V5.800H.8Z" fill="#404040" stroke="#262626" stroke-width=".8"/></svg><div style="left:66px;top:281px;width:4px;height:1px;background:repeating-linear-gradient(90deg,#8a8a8a 0 1px,transparent 1px 2px)"></div><svg style="left:70px;top:273px" width="16" height="16" viewBox="0 0 16 16"><path d="M.6 3.200Q.6 1.500 2.200 1.500H5Q6 1.500 6.500 2.300L7.200 3.500H12.500Q13.600 3.500 13.900 4.500L14.600 5.200Q15.100 5.600 15.100 6.300V9L13.900 9.600V11.600L12.400 13.500H2.600L.6 11.500Z" fill="#f3d258" stroke="#c4920e" stroke-width="1"/><path d="M1.500 3.200Q1.500 2.400 2.300 2.400H5Q5.600 2.400 5.900 3L6.500 4.500H2.200V10Z" fill="#fff2a6"/><path d="M2.300 5.800H13V11.300L12 12.600H2.900L1.900 11.300Z" fill="url(#gFold2)"/><path d="M13.700 5.500V8.600L14.300 8.300V6.300Z" fill="#fff6c0"/><rect x="3" y="6" width="9" height="5.500" fill="#fff"/><path d="M3.500 8.500h8M3.500 10.500h8" stroke="#a8c4f0" stroke-width="1" opacity=".7"/><path d="M5 8.500h1.500M7 8.500h2M9.500 8.500h1M4.500 10.500h1M6.500 10.500h2M9 10.500h1.500" stroke="#111" stroke-width="1"/><path d="M9 .8L9.500 4H12.300L12.800 .8L10.900 2.600Z" fill="#f5300f" stroke="#f5300f" stroke-width=".4"/></svg><span class="t r8" style="left:90.30px;top:276.00px;font-size:11px;">Управление при превышении порога по температурам</span><div style="left:80px;top:297px;width:10px;height:1px;background:repeating-linear-gradient(90deg,#8a8a8a 0 1px,transparent 1px 2px)"></div><svg style="left:90px;top:289px" width="16" height="16" viewBox="0 0 16 16"><path d="M2.500 2v13M5.500 2v13M8.500 2v13M11.500 2v13M14.500 2v13M1 4.500h15M1 7.500h15M1 10.500h15M1 13.500h15" stroke="#ccccff" stroke-width="1"/><path d="M5.500 0v16M0 10.500h16" stroke="#26266a" stroke-width="1"/><path d="M2 12.500Q4 12 5.500 10.500Q7 9.500 8 11.500Q9.500 9 11 6Q12 5 12.500 7L13.500 11" fill="none" stroke="#f03018" stroke-width="1.100"/></svg><span class="t r9" style="left:110.10px;top:292.00px;font-size:11px;letter-spacing:0.034px;">Скорость вентилятора при превышении температур</span><div style="left:80px;top:313px;width:10px;height:1px;background:repeating-linear-gradient(90deg,#8a8a8a 0 1px,transparent 1px 2px)"></div><svg style="left:91px;top:308px" width="14" height="11" viewBox="0 0 14 11"><path d="M3.500 .5H13.500V10.500H.5V3.500Z" fill="url(#gN)" stroke="#3fa0ff" stroke-width="1"/><path d="M.5 3.500L3.500 .5V3.500Z" fill="#7cc0ff"/><rect x="1.500" y="6" width="3" height="1" fill="#f00"/><rect x="1.500" y="8" width="3" height="1" fill="#f00"/><path d="M5.700 3v6.300" stroke="#000" stroke-width="1.300"/><rect x="7.400" y="8" width="1.300" height="1.300" fill="#000"/><path d="M9.300 4.400Q9.500 3.200 10.800 3.200Q12.300 3.200 12.300 4.600Q12.300 5.600 9.500 8.700H12.600" fill="none" stroke="#000" stroke-width="1.250"/></svg><span class="t r10" style="left:110.10px;top:308.00px;font-size:11px;letter-spacing:0.048px;">Мин. скорость вращения вентилятора</span><div style="left:80px;top:329px;width:10px;height:1px;background:repeating-linear-gradient(90deg,#8a8a8a 0 1px,transparent 1px 2px)"></div><svg style="left:91px;top:324px" width="14" height="11" viewBox="0 0 14 11"><path d="M3.500 .5H13.500V10.500H.5V3.500Z" fill="url(#gN)" stroke="#3fa0ff" stroke-width="1"/><path d="M.5 3.500L3.500 .5V3.500Z" fill="#7cc0ff"/><rect x="1.500" y="6" width="3" height="1" fill="#f00"/><rect x="1.500" y="8" width="3" height="1" fill="#f00"/><path d="M5.700 3v6.300" stroke="#000" stroke-width="1.300"/><rect x="7.400" y="8" width="1.300" height="1.300" fill="#000"/><path d="M9.300 4.400Q9.500 3.200 10.800 3.200Q12.300 3.200 12.300 4.600Q12.300 5.600 9.500 8.700H12.600" fill="none" stroke="#000" stroke-width="1.250"/></svg><span class="t r11" style="left:110.10px;top:324.00px;font-size:11px;letter-spacing:0.074px;">Макс. скорость вращения вентилятора</span><svg style="left:76px;top:342px" width="7" height="7" viewBox="0 0 7 7"><path d="M5.800 .8V5.800H.8Z" fill="#404040" stroke="#262626" stroke-width=".8"/></svg><div style="left:86px;top:345px;width:4px;height:1px;background:repeating-linear-gradient(90deg,#8a8a8a 0 1px,transparent 1px 2px)"></div><svg style="left:90px;top:337px" width="16" height="16" viewBox="0 0 16 16"><path d="M.6 3.200Q.6 1.500 2.200 1.500H5Q6 1.500 6.500 2.300L7.200 3.500H12.500Q13.600 3.500 13.900 4.500L14.600 5.200Q15.100 5.600 15.100 6.300V9L13.900 9.600V11.600L12.400 13.500H2.600L.6 11.500Z" fill="#f3d258" stroke="#c4920e" stroke-width="1"/><path d="M1.500 3.200Q1.500 2.400 2.300 2.400H5Q5.600 2.400 5.900 3L6.500 4.500H2.200V10Z" fill="#fff2a6"/><path d="M2.300 5.800H13V11.300L12 12.600H2.900L1.900 11.300Z" fill="url(#gFold2)"/><path d="M13.700 5.500V8.600L14.300 8.300V6.300Z" fill="#fff6c0"/><rect x="3" y="6" width="9" height="5.500" fill="#fff"/><path d="M3.500 8.500h8M3.500 10.500h8" stroke="#a8c4f0" stroke-width="1" opacity=".7"/><path d="M5 8.500h1.500M7 8.500h2M9.500 8.500h1M4.500 10.500h1M6.500 10.500h2M9 10.500h1.500" stroke="#111" stroke-width="1"/><path d="M9 .8L9.500 4H12.300L12.800 .8L10.900 2.600Z" fill="#f5300f" stroke="#f5300f" stroke-width=".4"/></svg><span class="t r12" style="left:110.30px;top:340.00px;font-size:11px;letter-spacing:0.147px;">Расчет дельты температур</span><div style="left:100px;top:361px;width:10px;height:1px;background:repeating-linear-gradient(90deg,#8a8a8a 0 1px,transparent 1px 2px)"></div><svg style="left:111px;top:356px" width="14" height="11" viewBox="0 0 14 11"><path d="M3.500 .5H13.500V10.500H.5V3.500Z" fill="url(#gN)" stroke="#3fa0ff" stroke-width="1"/><path d="M.5 3.500L3.500 .5V3.500Z" fill="#7cc0ff"/><rect x="1.500" y="6" width="3" height="1" fill="#f00"/><rect x="1.500" y="8" width="3" height="1" fill="#f00"/><path d="M5.700 3v6.300" stroke="#000" stroke-width="1.300"/><rect x="7.400" y="8" width="1.300" height="1.300" fill="#000"/><path d="M9.300 4.400Q9.500 3.200 10.800 3.200Q12.300 3.200 12.300 4.600Q12.300 5.600 9.500 8.700H12.600" fill="none" stroke="#000" stroke-width="1.250"/></svg><span class="t r13" style="left:130.10px;top:356.00px;font-size:11px;letter-spacing:0.073px;">Порог ТОЖ для вкл. вентилятора</span><div style="left:100px;top:377px;width:10px;height:1px;background:repeating-linear-gradient(90deg,#8a8a8a 0 1px,transparent 1px 2px)"></div><svg style="left:111px;top:372px" width="14" height="11" viewBox="0 0 14 11"><path d="M3.500 .5H13.500V10.500H.5V3.500Z" fill="url(#gN)" stroke="#3fa0ff" stroke-width="1"/><path d="M.5 3.500L3.500 .5V3.500Z" fill="#7cc0ff"/><rect x="1.500" y="6" width="3" height="1" fill="#f00"/><rect x="1.500" y="8" width="3" height="1" fill="#f00"/><path d="M5.700 3v6.300" stroke="#000" stroke-width="1.300"/><rect x="7.400" y="8" width="1.300" height="1.300" fill="#000"/><path d="M9.300 4.400Q9.500 3.200 10.800 3.200Q12.300 3.200 12.300 4.600Q12.300 5.600 9.500 8.700H12.600" fill="none" stroke="#000" stroke-width="1.250"/></svg><span class="t r14" style="left:130.10px;top:372.00px;font-size:11px;letter-spacing:0.020px;">Мин. Tconstr для использования коррекции</span><div style="left:100px;top:393px;width:10px;height:1px;background:repeating-linear-gradient(90deg,#8a8a8a 0 1px,transparent 1px 2px)"></div><svg style="left:111px;top:388px" width="14" height="11" viewBox="0 0 14 11"><path d="M3.500 .5H13.500V10.500H.5V3.500Z" fill="url(#gN)" stroke="#3fa0ff" stroke-width="1"/><path d="M.5 3.500L3.500 .5V3.500Z" fill="#7cc0ff"/><rect x="1.500" y="6" width="3" height="1" fill="#f00"/><rect x="1.500" y="8" width="3" height="1" fill="#f00"/><path d="M5.700 3v6.300" stroke="#000" stroke-width="1.300"/><rect x="7.400" y="8" width="1.300" height="1.300" fill="#000"/><path d="M9.300 4.400Q9.500 3.200 10.800 3.200Q12.300 3.200 12.300 4.600Q12.300 5.600 9.500 8.700H12.600" fill="none" stroke="#000" stroke-width="1.250"/></svg><span class="t r15" style="left:130.10px;top:388.00px;font-size:11px;letter-spacing:0.067px;">Коэфф.фильтра при низких Tconstr</span><div style="left:100px;top:409px;width:10px;height:1px;background:repeating-linear-gradient(90deg,#8a8a8a 0 1px,transparent 1px 2px)"></div><svg style="left:111px;top:404px" width="14" height="11" viewBox="0 0 14 11"><path d="M3.500 .5H13.500V10.500H.5V3.500Z" fill="url(#gN)" stroke="#3fa0ff" stroke-width="1"/><path d="M.5 3.500L3.500 .5V3.500Z" fill="#7cc0ff"/><rect x="1.500" y="6" width="3" height="1" fill="#f00"/><rect x="1.500" y="8" width="3" height="1" fill="#f00"/><path d="M5.700 3v6.300" stroke="#000" stroke-width="1.300"/><rect x="7.400" y="8" width="1.300" height="1.300" fill="#000"/><path d="M9.300 4.400Q9.500 3.200 10.800 3.200Q12.300 3.200 12.300 4.600Q12.300 5.600 9.500 8.700H12.600" fill="none" stroke="#000" stroke-width="1.250"/></svg><span class="t r16" style="left:130.10px;top:404.00px;font-size:11px;letter-spacing:0.030px;">Коэфф.фильтра при высоких Tconstr</span><svg style="left:76px;top:422px" width="7" height="7" viewBox="0 0 7 7"><path d="M5.800 .8V5.800H.8Z" fill="#404040" stroke="#262626" stroke-width=".8"/></svg><div style="left:86px;top:425px;width:4px;height:1px;background:repeating-linear-gradient(90deg,#8a8a8a 0 1px,transparent 1px 2px)"></div><svg style="left:90px;top:417px" width="16" height="16" viewBox="0 0 16 16"><path d="M.6 3.200Q.6 1.500 2.200 1.500H5Q6 1.500 6.500 2.300L7.200 3.500H12.500Q13.600 3.500 13.900 4.500L14.600 5.200Q15.100 5.600 15.100 6.300V9L13.900 9.600V11.600L12.400 13.500H2.600L.6 11.500Z" fill="#f3d258" stroke="#c4920e" stroke-width="1"/><path d="M1.500 3.200Q1.500 2.400 2.300 2.400H5Q5.600 2.400 5.900 3L6.500 4.500H2.200V10Z" fill="#fff2a6"/><path d="M2.300 5.800H13V11.300L12 12.600H2.900L1.900 11.300Z" fill="url(#gFold2)"/><path d="M13.700 5.500V8.600L14.300 8.300V6.300Z" fill="#fff6c0"/></svg><span class="t r17" style="left:110.30px;top:420.00px;font-size:11px;letter-spacing:0.045px;">Коррекция при высоких ТОЖ</span><div style="left:100px;top:441px;width:10px;height:1px;background:repeating-linear-gradient(90deg,#8a8a8a 0 1px,transparent 1px 2px)"></div><svg style="left:111px;top:436px" width="14" height="11" viewBox="0 0 14 11"><path d="M3.500 .5H13.500V10.500H.5V3.500Z" fill="url(#gN)" stroke="#3fa0ff" stroke-width="1"/><path d="M.5 3.500L3.500 .5V3.500Z" fill="#7cc0ff"/><rect x="1.500" y="6" width="3" height="1" fill="#f00"/><rect x="1.500" y="8" width="3" height="1" fill="#f00"/><path d="M5.700 3v6.300" stroke="#000" stroke-width="1.300"/><rect x="7.400" y="8" width="1.300" height="1.300" fill="#000"/><path d="M9.300 4.400Q9.500 3.200 10.800 3.200Q12.300 3.200 12.300 4.600Q12.300 5.600 9.500 8.700H12.600" fill="none" stroke="#000" stroke-width="1.250"/></svg><span class="t r18" style="left:130.10px;top:436.00px;font-size:11px;letter-spacing:0.084px;">Мин. ТОЖ для вкл. коррекции</span><div style="left:100px;top:457px;width:10px;height:1px;background:repeating-linear-gradient(90deg,#8a8a8a 0 1px,transparent 1px 2px)"></div><svg style="left:111px;top:452px" width="14" height="11" viewBox="0 0 14 11"><path d="M3.500 .5H13.500V10.500H.5V3.500Z" fill="url(#gN)" stroke="#3fa0ff" stroke-width="1"/><path d="M.5 3.500L3.500 .5V3.500Z" fill="#7cc0ff"/><rect x="1.500" y="6" width="3" height="1" fill="#f00"/><rect x="1.500" y="8" width="3" height="1" fill="#f00"/><path d="M5.700 3v6.300" stroke="#000" stroke-width="1.300"/><rect x="7.400" y="8" width="1.300" height="1.300" fill="#000"/><path d="M9.300 4.400Q9.500 3.200 10.800 3.200Q12.300 3.200 12.300 4.600Q12.300 5.600 9.500 8.700H12.600" fill="none" stroke="#000" stroke-width="1.250"/></svg><span class="t r19" style="left:130.10px;top:452.00px;font-size:11px;letter-spacing:0.005px;">Длина фильтра для расчета средней ТОЖ</span><div style="left:100px;top:473px;width:10px;height:1px;background:repeating-linear-gradient(90deg,#8a8a8a 0 1px,transparent 1px 2px)"></div><svg style="left:110px;top:465px" width="16" height="16" viewBox="0 0 16 16"><path d="M2.500 2v13M5.500 2v13M8.500 2v13M11.500 2v13M14.500 2v13M1 4.500h15M1 7.500h15M1 10.500h15M1 13.500h15" stroke="#ccccff" stroke-width="1"/><path d="M5.500 0v16M0 10.500h16" stroke="#26266a" stroke-width="1"/><path d="M2 12.500Q4 12 5.500 10.500Q7 9.500 8 11.500Q9.500 9 11 6Q12 5 12.500 7L13.500 11" fill="none" stroke="#f03018" stroke-width="1.100"/></svg><span class="t r20" style="left:130.10px;top:468.00px;font-size:11px;letter-spacing:0.130px;">Добавка к скорости вентилятора по градиенту</span><svg style="left:76px;top:486px" width="7" height="7" viewBox="0 0 7 7"><path d="M5.800 .8V5.800H.8Z" fill="#404040" stroke="#262626" stroke-width=".8"/></svg><div style="left:86px;top:489px;width:4px;height:1px;background:repeating-linear-gradient(90deg,#8a8a8a 0 1px,transparent 1px 2px)"></div><svg style="left:90px;top:481px" width="16" height="16" viewBox="0 0 16 16"><path d="M.6 3.200Q.6 1.500 2.200 1.500H5Q6 1.500 6.500 2.300L7.200 3.500H12.500Q13.600 3.500 13.900 4.500L14.600 5.200Q15.100 5.600 15.100 6.300V9L13.900 9.600V11.600L12.400 13.500H2.600L.6 11.500Z" fill="#f3d258" stroke="#c4920e" stroke-width="1"/><path d="M1.500 3.200Q1.500 2.400 2.300 2.400H5Q5.600 2.400 5.900 3L6.500 4.500H2.200V10Z" fill="#fff2a6"/><path d="M2.300 5.800H13V11.300L12 12.600H2.900L1.900 11.300Z" fill="url(#gFold2)"/><path d="M13.700 5.500V8.600L14.300 8.300V6.300Z" fill="#fff6c0"/></svg><span class="t r21" style="left:110.30px;top:484.00px;font-size:11px;letter-spacing:0.051px;">Динамическая коррекция по градиенту ТОЖ</span><div style="left:100px;top:505px;width:10px;height:1px;background:repeating-linear-gradient(90deg,#8a8a8a 0 1px,transparent 1px 2px)"></div><svg style="left:111px;top:500px" width="14" height="11" viewBox="0 0 14 11"><path d="M3.500 .5H13.500V10.500H.5V3.500Z" fill="url(#gN)" stroke="#3fa0ff" stroke-width="1"/><path d="M.5 3.500L3.500 .5V3.500Z" fill="#7cc0ff"/><rect x="1.500" y="6" width="3" height="1" fill="#f00"/><rect x="1.500" y="8" width="3" height="1" fill="#f00"/><path d="M5.700 3v6.300" stroke="#000" stroke-width="1.300"/><rect x="7.400" y="8" width="1.300" height="1.300" fill="#000"/><path d="M9.300 4.400Q9.500 3.200 10.800 3.200Q12.300 3.200 12.300 4.600Q12.300 5.600 9.500 8.700H12.600" fill="none" stroke="#000" stroke-width="1.250"/></svg><span class="t r22" style="left:130.10px;top:500.00px;font-size:11px;letter-spacing:0.085px;">Мин. добавка по градиенту ТОЖ</span><div style="left:100px;top:521px;width:10px;height:1px;background:repeating-linear-gradient(90deg,#8a8a8a 0 1px,transparent 1px 2px)"></div><svg style="left:111px;top:516px" width="14" height="11" viewBox="0 0 14 11"><path d="M3.500 .5H13.500V10.500H.5V3.500Z" fill="url(#gN)" stroke="#3fa0ff" stroke-width="1"/><path d="M.5 3.500L3.500 .5V3.500Z" fill="#7cc0ff"/><rect x="1.500" y="6" width="3" height="1" fill="#f00"/><rect x="1.500" y="8" width="3" height="1" fill="#f00"/><path d="M5.700 3v6.300" stroke="#000" stroke-width="1.300"/><rect x="7.400" y="8" width="1.300" height="1.300" fill="#000"/><path d="M9.300 4.400Q9.500 3.200 10.800 3.200Q12.300 3.200 12.300 4.600Q12.300 5.600 9.500 8.700H12.600" fill="none" stroke="#000" stroke-width="1.250"/></svg><span class="t r23" style="left:130.10px;top:516.00px;font-size:11px;letter-spacing:0.104px;">Макс. добавка по градиенту ТОЖ</span><div style="left:100px;top:537px;width:10px;height:1px;background:repeating-linear-gradient(90deg,#8a8a8a 0 1px,transparent 1px 2px)"></div><svg style="left:111px;top:532px" width="14" height="11" viewBox="0 0 14 11"><path d="M3.500 .5H13.500V10.500H.5V3.500Z" fill="url(#gN)" stroke="#3fa0ff" stroke-width="1"/><path d="M.5 3.500L3.500 .5V3.500Z" fill="#7cc0ff"/><rect x="1.500" y="6" width="3" height="1" fill="#f00"/><rect x="1.500" y="8" width="3" height="1" fill="#f00"/><path d="M5.700 3v6.300" stroke="#000" stroke-width="1.300"/><rect x="7.400" y="8" width="1.300" height="1.300" fill="#000"/><path d="M9.300 4.400Q9.500 3.200 10.800 3.200Q12.300 3.200 12.300 4.600Q12.300 5.600 9.500 8.700H12.600" fill="none" stroke="#000" stroke-width="1.250"/></svg><span class="t r24" style="left:130.10px;top:532.00px;font-size:11px;letter-spacing:0.094px;">Коэфф.добавки к скорости вентилятора</span><svg style="left:56px;top:550px" width="7" height="7" viewBox="0 0 7 7"><path d="M5.800 .8V5.800H.8Z" fill="#404040" stroke="#262626" stroke-width=".8"/></svg><div style="left:66px;top:553px;width:4px;height:1px;background:repeating-linear-gradient(90deg,#8a8a8a 0 1px,transparent 1px 2px)"></div><svg style="left:70px;top:545px" width="16" height="16" viewBox="0 0 16 16"><path d="M.6 3.200Q.6 1.500 2.200 1.500H5Q6 1.500 6.500 2.300L7.200 3.500H12.500Q13.600 3.500 13.900 4.500L14.600 5.200Q15.100 5.600 15.100 6.300V9L13.900 9.600V11.600L12.400 13.500H2.600L.6 11.500Z" fill="#f3d258" stroke="#c4920e" stroke-width="1"/><path d="M1.500 3.200Q1.500 2.400 2.300 2.400H5Q5.600 2.400 5.900 3L6.500 4.500H2.200V10Z" fill="#fff2a6"/><path d="M2.300 5.800H13V11.300L12 12.600H2.900L1.900 11.300Z" fill="url(#gFold2)"/><path d="M13.700 5.500V8.600L14.300 8.300V6.300Z" fill="#fff6c0"/><rect x="3" y="6" width="9" height="5.500" fill="#fff"/><path d="M3.500 8.500h8M3.500 10.500h8" stroke="#a8c4f0" stroke-width="1" opacity=".7"/><path d="M5 8.500h1.500M7 8.500h2M9.500 8.500h1M4.500 10.500h1M6.500 10.500h2M9 10.500h1.500" stroke="#111" stroke-width="1"/><path d="M9 .8L9.500 4H12.300L12.800 .8L10.900 2.600Z" fill="#f5300f" stroke="#f5300f" stroke-width=".4"/></svg><span class="t r25" style="left:90.30px;top:548.00px;font-size:11px;letter-spacing:0.062px;">Управление при высокой температуре воздуха</span><div style="left:80px;top:569px;width:10px;height:1px;background:repeating-linear-gradient(90deg,#8a8a8a 0 1px,transparent 1px 2px)"></div><svg style="left:91px;top:564px" width="14" height="11" viewBox="0 0 14 11"><path d="M3.500 .5H13.500V10.500H.5V3.500Z" fill="url(#gN)" stroke="#3fa0ff" stroke-width="1"/><path d="M.5 3.500L3.500 .5V3.500Z" fill="#7cc0ff"/><rect x="1.500" y="6" width="3" height="1" fill="#f00"/><rect x="1.500" y="8" width="3" height="1" fill="#f00"/><path d="M5.700 3v6.300" stroke="#000" stroke-width="1.300"/><rect x="7.400" y="8" width="1.300" height="1.300" fill="#000"/><path d="M9.300 4.400Q9.500 3.200 10.800 3.200Q12.300 3.200 12.300 4.600Q12.300 5.600 9.500 8.700H12.600" fill="none" stroke="#000" stroke-width="1.250"/></svg><span class="t r26" style="left:110.10px;top:564.00px;font-size:11px;letter-spacing:0.140px;">Мин. Твозд. для включения вентилятора</span><div style="left:80px;top:585px;width:10px;height:1px;background:repeating-linear-gradient(90deg,#8a8a8a 0 1px,transparent 1px 2px)"></div><svg style="left:91px;top:580px" width="14" height="11" viewBox="0 0 14 11"><path d="M3.500 .5H13.500V10.500H.5V3.500Z" fill="url(#gN)" stroke="#3fa0ff" stroke-width="1"/><path d="M.5 3.500L3.500 .5V3.500Z" fill="#7cc0ff"/><rect x="1.500" y="6" width="3" height="1" fill="#f00"/><rect x="1.500" y="8" width="3" height="1" fill="#f00"/><path d="M5.700 3v6.300" stroke="#000" stroke-width="1.300"/><rect x="7.400" y="8" width="1.300" height="1.300" fill="#000"/><path d="M9.300 4.400Q9.500 3.200 10.800 3.200Q12.300 3.200 12.300 4.600Q12.300 5.600 9.500 8.700H12.600" fill="none" stroke="#000" stroke-width="1.250"/></svg><span class="t r27" style="left:110.10px;top:580.00px;font-size:11px;letter-spacing:0.169px;">Мин. дельта для вкл. вентилятора</span><div style="left:80px;top:601px;width:10px;height:1px;background:repeating-linear-gradient(90deg,#8a8a8a 0 1px,transparent 1px 2px)"></div><svg style="left:91px;top:596px" width="14" height="11" viewBox="0 0 14 11"><path d="M3.500 .5H13.500V10.500H.5V3.500Z" fill="url(#gN)" stroke="#3fa0ff" stroke-width="1"/><path d="M.5 3.500L3.500 .5V3.500Z" fill="#7cc0ff"/><rect x="1.500" y="6" width="3" height="1" fill="#f00"/><rect x="1.500" y="8" width="3" height="1" fill="#f00"/><path d="M5.700 3v6.300" stroke="#000" stroke-width="1.300"/><rect x="7.400" y="8" width="1.300" height="1.300" fill="#000"/><path d="M9.300 4.400Q9.500 3.200 10.800 3.200Q12.300 3.200 12.300 4.600Q12.300 5.600 9.500 8.700H12.600" fill="none" stroke="#000" stroke-width="1.250"/></svg><span class="t r28" style="left:110.10px;top:596.00px;font-size:11px;letter-spacing:0.114px;">Макс. скорость для включения вентилятора</span><div style="left:80px;top:617px;width:10px;height:1px;background:repeating-linear-gradient(90deg,#8a8a8a 0 1px,transparent 1px 2px)"></div><svg style="left:91px;top:612px" width="14" height="11" viewBox="0 0 14 11"><path d="M3.500 .5H13.500V10.500H.5V3.500Z" fill="url(#gN)" stroke="#3fa0ff" stroke-width="1"/><path d="M.5 3.500L3.500 .5V3.500Z" fill="#7cc0ff"/><rect x="1.500" y="6" width="3" height="1" fill="#f00"/><rect x="1.500" y="8" width="3" height="1" fill="#f00"/><path d="M5.700 3v6.300" stroke="#000" stroke-width="1.300"/><rect x="7.400" y="8" width="1.300" height="1.300" fill="#000"/><path d="M9.300 4.400Q9.500 3.200 10.800 3.200Q12.300 3.200 12.300 4.600Q12.300 5.600 9.500 8.700H12.600" fill="none" stroke="#000" stroke-width="1.250"/></svg><span class="t r29" style="left:110.10px;top:612.00px;font-size:11px;letter-spacing:0.047px;">Смещение для расчета дельты температур</span><div style="left:80px;top:633px;width:10px;height:1px;background:repeating-linear-gradient(90deg,#8a8a8a 0 1px,transparent 1px 2px)"></div><svg style="left:90px;top:625px" width="16" height="16" viewBox="0 0 16 16"><path d="M2.500 2v13M5.500 2v13M8.500 2v13M11.500 2v13M14.500 2v13M1 4.500h15M1 7.500h15M1 10.500h15M1 13.500h15" stroke="#ccccff" stroke-width="1"/><path d="M5.500 0v16M0 10.500h16" stroke="#26266a" stroke-width="1"/><path d="M2 12.500Q4 12 5.500 10.500Q7 9.500 8 11.500Q9.500 9 11 6Q12 5 12.500 7L13.500 11" fill="none" stroke="#f03018" stroke-width="1.100"/></svg><span class="t r30" style="left:110.10px;top:628.00px;font-size:11px;letter-spacing:0.034px;">Скорость вентилятора при превышении температур</span><div style="left:80px;top:649px;width:10px;height:1px;background:repeating-linear-gradient(90deg,#8a8a8a 0 1px,transparent 1px 2px)"></div><svg style="left:91px;top:644px" width="14" height="11" viewBox="0 0 14 11"><path d="M3.500 .5H13.500V10.500H.5V3.500Z" fill="url(#gN)" stroke="#3fa0ff" stroke-width="1"/><path d="M.5 3.500L3.500 .5V3.500Z" fill="#7cc0ff"/><rect x="1.500" y="6" width="3" height="1" fill="#f00"/><rect x="1.500" y="8" width="3" height="1" fill="#f00"/><path d="M5.700 3v6.300" stroke="#000" stroke-width="1.300"/><rect x="7.400" y="8" width="1.300" height="1.300" fill="#000"/><path d="M9.300 4.400Q9.500 3.200 10.800 3.200Q12.300 3.200 12.300 4.600Q12.300 5.600 9.500 8.700H12.600" fill="none" stroke="#000" stroke-width="1.250"/></svg><span class="t r31" style="left:110.10px;top:644.00px;font-size:11px;letter-spacing:0.015px;">Шаг уменьшения скорости вентилятора</span><div style="left:80px;top:665px;width:10px;height:1px;background:repeating-linear-gradient(90deg,#8a8a8a 0 1px,transparent 1px 2px)"></div><svg style="left:91px;top:660px" width="14" height="11" viewBox="0 0 14 11"><path d="M3.500 .5H13.500V10.500H.5V3.500Z" fill="url(#gN)" stroke="#3fa0ff" stroke-width="1"/><path d="M.5 3.500L3.500 .5V3.500Z" fill="#7cc0ff"/><rect x="1.500" y="6" width="3" height="1" fill="#f00"/><rect x="1.500" y="8" width="3" height="1" fill="#f00"/><path d="M5.700 3v6.300" stroke="#000" stroke-width="1.300"/><rect x="7.400" y="8" width="1.300" height="1.300" fill="#000"/><path d="M9.300 4.400Q9.500 3.200 10.800 3.200Q12.300 3.200 12.300 4.600Q12.300 5.600 9.500 8.700H12.600" fill="none" stroke="#000" stroke-width="1.250"/></svg><span class="t r32" style="left:110.10px;top:660.00px;font-size:11px;letter-spacing:0.087px;">Шаг увеличения скорости вентилятора</span><svg style="left:56px;top:678px" width="7" height="7" viewBox="0 0 7 7"><path d="M5.800 .8V5.800H.8Z" fill="#404040" stroke="#262626" stroke-width=".8"/></svg><div style="left:66px;top:681px;width:4px;height:1px;background:repeating-linear-gradient(90deg,#8a8a8a 0 1px,transparent 1px 2px)"></div><svg style="left:70px;top:673px" width="16" height="16" viewBox="0 0 16 16"><path d="M.6 3.200Q.6 1.500 2.200 1.500H5Q6 1.500 6.500 2.300L7.200 3.500H12.500Q13.600 3.500 13.900 4.500L14.600 5.200Q15.100 5.600 15.100 6.300V9L13.900 9.600V11.600L12.400 13.500H2.600L.6 11.500Z" fill="#f3d258" stroke="#c4920e" stroke-width="1"/><path d="M1.500 3.200Q1.500 2.400 2.300 2.400H5Q5.600 2.400 5.900 3L6.500 4.500H2.200V10Z" fill="#fff2a6"/><path d="M2.300 5.800H13V11.300L12 12.600H2.900L1.900 11.300Z" fill="url(#gFold2)"/><path d="M13.700 5.500V8.600L14.300 8.300V6.300Z" fill="#fff6c0"/></svg></div></div>
<div style="left:367px;top:144px;width:17px;height:533px;background:linear-gradient(90deg,#e6e6e6 0,#f0f0f0 3px,#f2f2f2 17px)"></div>
<div style="left:37px;top:677px;width:330px;height:16px;background:linear-gradient(180deg,#e6e6e6 0,#f0f0f0 3px,#f2f2f2 16px)"></div>
<div style="left:367px;top:677px;width:17px;height:16px;background:#f0f0f0"></div>
<div style="left:37px;top:693px;width:347px;height:1px;background:#fff"></div>
<div style="left:384px;top:144px;width:1px;height:550px;background:#fff"></div>
<div style="left:367px;top:565px;width:15px;height:21px;border:1px solid #8f8f8f;border-radius:3px;background:linear-gradient(90deg,#f6f6f6 0,#ebebed 46%,#d6d7da 54%,#c6c8cc 100%);box-shadow:inset 0 0 0 1px rgba(255,255,255,.75)"></div>
<div style="left:371px;top:571px;width:7px;height:1px;background:linear-gradient(90deg,#3c3c3c,#8a8a8a)"></div>
<div style="left:371px;top:572px;width:7px;height:1px;background:rgba(255,255,255,.8)"></div>
<div style="left:371px;top:574px;width:7px;height:1px;background:linear-gradient(90deg,#3c3c3c,#8a8a8a)"></div>
<div style="left:371px;top:575px;width:7px;height:1px;background:rgba(255,255,255,.8)"></div>
<div style="left:371px;top:577px;width:7px;height:1px;background:linear-gradient(90deg,#3c3c3c,#8a8a8a)"></div>
<div style="left:371px;top:578px;width:7px;height:1px;background:rgba(255,255,255,.8)"></div>
<div style="left:74px;top:678px;width:184px;height:14px;border:1px solid #8f8f8f;border-radius:3px;background:linear-gradient(180deg,#f6f6f6 0,#ebebed 46%,#d6d7da 54%,#c6c8cc 100%);box-shadow:inset 0 0 0 1px rgba(255,255,255,.75)"></div>
<div style="left:162px;top:681px;width:1px;height:7px;background:linear-gradient(180deg,#3c3c3c,#8a8a8a)"></div>
<div style="left:163px;top:681px;width:1px;height:7px;background:rgba(255,255,255,.8)"></div>
<div style="left:165px;top:681px;width:1px;height:7px;background:linear-gradient(180deg,#3c3c3c,#8a8a8a)"></div>
<div style="left:166px;top:681px;width:1px;height:7px;background:rgba(255,255,255,.8)"></div>
<div style="left:168px;top:681px;width:1px;height:7px;background:linear-gradient(180deg,#3c3c3c,#8a8a8a)"></div>
<div style="left:169px;top:681px;width:1px;height:7px;background:rgba(255,255,255,.8)"></div>
<svg style="left:372px;top:151px" width="7" height="4" viewBox="0 0 7 4"><path d="M0 4L3.500 0L7 4Z" fill="#505050"/></svg>
<svg style="left:372px;top:666px" width="7" height="4" viewBox="0 0 7 4"><path d="M0 0L3.500 4L7 0Z" fill="#505050"/></svg>
<svg style="left:44px;top:681px" width="4" height="7" viewBox="0 0 4 7"><path d="M4 0L0 3.500L4 7Z" fill="#505050"/></svg>
<svg style="left:355px;top:681px" width="4" height="7" viewBox="0 0 4 7"><path d="M0 0L4 3.500L0 7Z" fill="#505050"/></svg>
<span class="t" style="left:41.00px;top:715.00px;font-size:11px;letter-spacing:0.073px;">Поиск калибровки</span>
<div style="left:151px;top:709px;width:229px;height:21px;background:#fff;border-radius:3px;border:1px solid #d3dde8;border-top-color:#b4bec9"></div>
<div style="left:389px;top:96px;width:1px;height:645px;background:linear-gradient(180deg,#d6e5f8 0,#d6e5f8 43px,#aac4f0 43px,#98b4e4 304px,#7594d4 480px,#6a8cd0 645px)"></div>
<div style="left:390px;top:95px;width:626px;height:646px;background:#fff"></div>
<div style="left:390px;top:115px;width:624px;height:625px;border:1px solid #8b94a6"></div>
<div style="left:443px;top:97px;width:51px;height:19px;border:1px solid #8b94a6;border-bottom:none;background:linear-gradient(180deg,#f4f4f4 0,#ececec 8px,#dedede 9px,#d2d2d2 18px)"></div>
<span class="t" style="left:447.30px;top:102.00px;font-size:11px;letter-spacing:-0.157px;">Таблица</span>
<div style="left:390px;top:95px;width:54px;height:21px;border:1px solid #8b94a6;border-bottom:none;background:#fff"></div>
<span class="t" style="left:397.70px;top:100.00px;font-size:11px;letter-spacing:0.061px;">График</span>
<svg style="left:0;top:0" width="1024" height="768" viewBox="0 0 1024 768" shape-rendering="crispEdges"><path d="M454 555.5H1002" stroke="#6a6a6a" stroke-width="1" stroke-dasharray="1 1"/><path d="M454 533.5H1002" stroke="#6a6a6a" stroke-width="1" stroke-dasharray="1 1"/><path d="M454 512.5H1002" stroke="#6a6a6a" stroke-width="1" stroke-dasharray="1 1"/><path d="M454 491.5H1002" stroke="#6a6a6a" stroke-width="1" stroke-dasharray="1 1"/><path d="M454 470.5H1002" stroke="#6a6a6a" stroke-width="1" stroke-dasharray="1 1"/><path d="M454 448.5H1002" stroke="#6a6a6a" stroke-width="1" stroke-dasharray="1 1"/><path d="M454 427.5H1002" stroke="#6a6a6a" stroke-width="1" stroke-dasharray="1 1"/><path d="M454 406.5H1002" stroke="#6a6a6a" stroke-width="1" stroke-dasharray="1 1"/><path d="M454 384.5H1002" stroke="#6a6a6a" stroke-width="1" stroke-dasharray="1 1"/><path d="M454 363.5H1002" stroke="#6a6a6a" stroke-width="1" stroke-dasharray="1 1"/><path d="M454 342.5H1002" stroke="#6a6a6a" stroke-width="1" stroke-dasharray="1 1"/><path d="M454 321.5H1002" stroke="#6a6a6a" stroke-width="1" stroke-dasharray="1 1"/><path d="M454 299.5H1002" stroke="#6a6a6a" stroke-width="1" stroke-dasharray="1 1"/><path d="M454 278.5H1002" stroke="#6a6a6a" stroke-width="1" stroke-dasharray="1 1"/><path d="M454 257.5H1002" stroke="#6a6a6a" stroke-width="1" stroke-dasharray="1 1"/><path d="M454 235.5H1002" stroke="#6a6a6a" stroke-width="1" stroke-dasharray="1 1"/><path d="M454 214.5H1002" stroke="#6a6a6a" stroke-width="1" stroke-dasharray="1 1"/><path d="M454 193.5H1002" stroke="#6a6a6a" stroke-width="1" stroke-dasharray="1 1"/><path d="M454 172.5H1002" stroke="#6a6a6a" stroke-width="1" stroke-dasharray="1 1"/><path d="M532.5 152V576" stroke="#6a6a6a" stroke-width="1" stroke-dasharray="1 1"/><path d="M611.5 152V576" stroke="#6a6a6a" stroke-width="1" stroke-dasharray="1 1"/><path d="M689.5 152V576" stroke="#6a6a6a" stroke-width="1" stroke-dasharray="1 1"/><path d="M767.5 152V576" stroke="#6a6a6a" stroke-width="1" stroke-dasharray="1 1"/><path d="M845.5 152V576" stroke="#6a6a6a" stroke-width="1" stroke-dasharray="1 1"/><path d="M924.5 152V576" stroke="#6a6a6a" stroke-width="1" stroke-dasharray="1 1"/><path d="M450 576.5H454" stroke="#707070" stroke-width="1"/><path d="M450 555.5H454" stroke="#707070" stroke-width="1"/><path d="M450 533.5H454" stroke="#707070" stroke-width="1"/><path d="M450 512.5H454" stroke="#707070" stroke-width="1"/><path d="M450 491.5H454" stroke="#707070" stroke-width="1"/><path d="M450 470.5H454" stroke="#707070" stroke-width="1"/><path d="M450 448.5H454" stroke="#707070" stroke-width="1"/><path d="M450 427.5H454" stroke="#707070" stroke-width="1"/><path d="M450 406.5H454" stroke="#707070" stroke-width="1"/><path d="M450 384.5H454" stroke="#707070" stroke-width="1"/><path d="M450 363.5H454" stroke="#707070" stroke-width="1"/><path d="M450 342.5H454" stroke="#707070" stroke-width="1"/><path d="M450 321.5H454" stroke="#707070" stroke-width="1"/><path d="M450 299.5H454" stroke="#707070" stroke-width="1"/><path d="M450 278.5H454" stroke="#707070" stroke-width="1"/><path d="M450 257.5H454" stroke="#707070" stroke-width="1"/><path d="M450 235.5H454" stroke="#707070" stroke-width="1"/><path d="M450 214.5H454" stroke="#707070" stroke-width="1"/><path d="M450 193.5H454" stroke="#707070" stroke-width="1"/><path d="M450 172.5H454" stroke="#707070" stroke-width="1"/><path d="M452 572.5H454" stroke="#808080" stroke-width="1"/><path d="M452 567.5H454" stroke="#808080" stroke-width="1"/><path d="M452 563.5H454" stroke="#808080" stroke-width="1"/><path d="M452 559.5H454" stroke="#808080" stroke-width="1"/><path d="M452 550.5H454" stroke="#808080" stroke-width="1"/><path d="M452 546.5H454" stroke="#808080" stroke-width="1"/><path d="M452 542.5H454" stroke="#808080" stroke-width="1"/><path d="M452 538.5H454" stroke="#808080" stroke-width="1"/><path d="M452 529.5H454" stroke="#808080" stroke-width="1"/><path d="M452 525.5H454" stroke="#808080" stroke-width="1"/><path d="M452 521.5H454" stroke="#808080" stroke-width="1"/><path d="M452 516.5H454" stroke="#808080" stroke-width="1"/><path d="M452 508.5H454" stroke="#808080" stroke-width="1"/><path d="M452 504.5H454" stroke="#808080" stroke-width="1"/><path d="M452 499.5H454" stroke="#808080" stroke-width="1"/><path d="M452 495.5H454" stroke="#808080" stroke-width="1"/><path d="M452 487.5H454" stroke="#808080" stroke-width="1"/><path d="M452 482.5H454" stroke="#808080" stroke-width="1"/><path d="M452 478.5H454" stroke="#808080" stroke-width="1"/><path d="M452 474.5H454" stroke="#808080" stroke-width="1"/><path d="M452 465.5H454" stroke="#808080" stroke-width="1"/><path d="M452 461.5H454" stroke="#808080" stroke-width="1"/><path d="M452 457.5H454" stroke="#808080" stroke-width="1"/><path d="M452 453.5H454" stroke="#808080" stroke-width="1"/><path d="M452 444.5H454" stroke="#808080" stroke-width="1"/><path d="M452 440.5H454" stroke="#808080" stroke-width="1"/><path d="M452 436.5H454" stroke="#808080" stroke-width="1"/><path d="M452 431.5H454" stroke="#808080" stroke-width="1"/><path d="M452 423.5H454" stroke="#808080" stroke-width="1"/><path d="M452 419.5H454" stroke="#808080" stroke-width="1"/><path d="M452 414.5H454" stroke="#808080" stroke-width="1"/><path d="M452 410.5H454" stroke="#808080" stroke-width="1"/><path d="M452 401.5H454" stroke="#808080" stroke-width="1"/><path d="M452 397.5H454" stroke="#808080" stroke-width="1"/><path d="M452 393.5H454" stroke="#808080" stroke-width="1"/><path d="M452 389.5H454" stroke="#808080" stroke-width="1"/><path d="M452 380.5H454" stroke="#808080" stroke-width="1"/><path d="M452 376.5H454" stroke="#808080" stroke-width="1"/><path d="M452 372.5H454" stroke="#808080" stroke-width="1"/><path d="M452 367.5H454" stroke="#808080" stroke-width="1"/><path d="M452 359.5H454" stroke="#808080" stroke-width="1"/><path d="M452 355.5H454" stroke="#808080" stroke-width="1"/><path d="M452 350.5H454" stroke="#808080" stroke-width="1"/><path d="M452 346.5H454" stroke="#808080" stroke-width="1"/><path d="M452 338.5H454" stroke="#808080" stroke-width="1"/><path d="M452 333.5H454" stroke="#808080" stroke-width="1"/><path d="M452 329.5H454" stroke="#808080" stroke-width="1"/><path d="M452 325.5H454" stroke="#808080" stroke-width="1"/><path d="M452 316.5H454" stroke="#808080" stroke-width="1"/><path d="M452 312.5H454" stroke="#808080" stroke-width="1"/><path d="M452 308.5H454" stroke="#808080" stroke-width="1"/><path d="M452 304.5H454" stroke="#808080" stroke-width="1"/><path d="M452 295.5H454" stroke="#808080" stroke-width="1"/><path d="M452 291.5H454" stroke="#808080" stroke-width="1"/><path d="M452 287.5H454" stroke="#808080" stroke-width="1"/><path d="M452 282.5H454" stroke="#808080" stroke-width="1"/><path d="M452 274.5H454" stroke="#808080" stroke-width="1"/><path d="M452 270.5H454" stroke="#808080" stroke-width="1"/><path d="M452 265.5H454" stroke="#808080" stroke-width="1"/><path d="M452 261.5H454" stroke="#808080" stroke-width="1"/><path d="M452 252.5H454" stroke="#808080" stroke-width="1"/><path d="M452 248.5H454" stroke="#808080" stroke-width="1"/><path d="M452 244.5H454" stroke="#808080" stroke-width="1"/><path d="M452 240.5H454" stroke="#808080" stroke-width="1"/><path d="M452 231.5H454" stroke="#808080" stroke-width="1"/><path d="M452 227.5H454" stroke="#808080" stroke-width="1"/><path d="M452 223.5H454" stroke="#808080" stroke-width="1"/><path d="M452 218.5H454" stroke="#808080" stroke-width="1"/><path d="M452 210.5H454" stroke="#808080" stroke-width="1"/><path d="M452 206.5H454" stroke="#808080" stroke-width="1"/><path d="M452 201.5H454" stroke="#808080" stroke-width="1"/><path d="M452 197.5H454" stroke="#808080" stroke-width="1"/><path d="M452 189.5H454" stroke="#808080" stroke-width="1"/><path d="M452 184.5H454" stroke="#808080" stroke-width="1"/><path d="M452 180.5H454" stroke="#808080" stroke-width="1"/><path d="M452 176.5H454" stroke="#808080" stroke-width="1"/><path d="M452 167.5H454" stroke="#808080" stroke-width="1"/><path d="M452 163.5H454" stroke="#808080" stroke-width="1"/><path d="M452 159.5H454" stroke="#808080" stroke-width="1"/><path d="M452 155.5H454" stroke="#808080" stroke-width="1"/><path d="M454.5 576V581" stroke="#606060" stroke-width="1"/><path d="M532.5 576V581" stroke="#606060" stroke-width="1"/><path d="M611.5 576V581" stroke="#606060" stroke-width="1"/><path d="M689.5 576V581" stroke="#606060" stroke-width="1"/><path d="M767.5 576V581" stroke="#606060" stroke-width="1"/><path d="M845.5 576V581" stroke="#606060" stroke-width="1"/><path d="M924.5 576V581" stroke="#606060" stroke-width="1"/><path d="M1002.5 576V581" stroke="#606060" stroke-width="1"/><path d="M470.5 576V579" stroke="#707070" stroke-width="1"/><path d="M485.5 576V579" stroke="#707070" stroke-width="1"/><path d="M501.5 576V579" stroke="#707070" stroke-width="1"/><path d="M517.5 576V579" stroke="#707070" stroke-width="1"/><path d="M548.5 576V579" stroke="#707070" stroke-width="1"/><path d="M564.5 576V579" stroke="#707070" stroke-width="1"/><path d="M579.5 576V579" stroke="#707070" stroke-width="1"/><path d="M595.5 576V579" stroke="#707070" stroke-width="1"/><path d="M626.5 576V579" stroke="#707070" stroke-width="1"/><path d="M642.5 576V579" stroke="#707070" stroke-width="1"/><path d="M658.5 576V579" stroke="#707070" stroke-width="1"/><path d="M673.5 576V579" stroke="#707070" stroke-width="1"/><path d="M705.5 576V579" stroke="#707070" stroke-width="1"/><path d="M720.5 576V579" stroke="#707070" stroke-width="1"/><path d="M736.5 576V579" stroke="#707070" stroke-width="1"/><path d="M751.5 576V579" stroke="#707070" stroke-width="1"/><path d="M783.5 576V579" stroke="#707070" stroke-width="1"/><path d="M798.5 576V579" stroke="#707070" stroke-width="1"/><path d="M814.5 576V579" stroke="#707070" stroke-width="1"/><path d="M830.5 576V579" stroke="#707070" stroke-width="1"/><path d="M861.5 576V579" stroke="#707070" stroke-width="1"/><path d="M877.5 576V579" stroke="#707070" stroke-width="1"/><path d="M892.5 576V579" stroke="#707070" stroke-width="1"/><path d="M908.5 576V579" stroke="#707070" stroke-width="1"/><path d="M939.5 576V579" stroke="#707070" stroke-width="1"/><path d="M955.5 576V579" stroke="#707070" stroke-width="1"/><path d="M971.5 576V579" stroke="#707070" stroke-width="1"/><path d="M986.5 576V579" stroke="#707070" stroke-width="1"/><path d="M454 152.5H1002" stroke="#000" stroke-width="1"/><path d="M1002.5 152V576" stroke="#000" stroke-width="1"/><path d="M454 152V577" stroke="#000" stroke-width="2"/><path d="M453 576H1003" stroke="#000" stroke-width="2"/></svg>
<svg style="left:455px;top:153px;overflow:hidden" width="547" height="422" viewBox="455 153 547 422"><polyline points="454.0,576.0 532.3,467.9 610.6,376.5 688.9,321.6 767.1,263.4 845.4,216.8 923.7,167.0 1002.0,152.0" fill="none" stroke="#0038dc" stroke-width="1.100"/><circle cx="454.0" cy="576.0" r="5.400" fill="#0a34d2" stroke="#000" stroke-width="1.100"/><circle cx="532.3" cy="467.9" r="5.400" fill="#0a34d2" stroke="#000" stroke-width="1.100"/><circle cx="610.6" cy="376.5" r="5.400" fill="#0a34d2" stroke="#000" stroke-width="1.100"/><circle cx="688.9" cy="321.6" r="5.400" fill="#0a34d2" stroke="#000" stroke-width="1.100"/><circle cx="767.1" cy="263.4" r="5.400" fill="#0a34d2" stroke="#000" stroke-width="1.100"/><circle cx="845.4" cy="216.8" r="5.400" fill="#0a34d2" stroke="#000" stroke-width="1.100"/><circle cx="923.7" cy="167.0" r="5.400" fill="#0a34d2" stroke="#000" stroke-width="1.100"/><circle cx="1002.0" cy="152.0" r="5.400" fill="#0a34d2" stroke="#000" stroke-width="1.100"/></svg>
<div style="left:396px;top:0;width:50.500px;height:0"><span class="t" style="left:0.00px;top:571.00px;font-size:11px;right:0;left:auto;">- 100</span></div>
<div style="left:396px;top:0;width:50.500px;height:0"><span class="t" style="left:0.00px;top:550.00px;font-size:11px;right:0;left:auto;">- 90</span></div>
<div style="left:396px;top:0;width:50.500px;height:0"><span class="t" style="left:0.00px;top:528.00px;font-size:11px;right:0;left:auto;">- 80</span></div>
<div style="left:396px;top:0;width:50.500px;height:0"><span class="t" style="left:0.00px;top:507.00px;font-size:11px;right:0;left:auto;">- 70</span></div>
<div style="left:396px;top:0;width:50.500px;height:0"><span class="t" style="left:0.00px;top:486.00px;font-size:11px;right:0;left:auto;">- 60</span></div>
<div style="left:396px;top:0;width:50.500px;height:0"><span class="t" style="left:0.00px;top:465.00px;font-size:11px;right:0;left:auto;">- 50</span></div>
<div style="left:396px;top:0;width:50.500px;height:0"><span class="t" style="left:0.00px;top:443.00px;font-size:11px;right:0;left:auto;">- 40</span></div>
<div style="left:396px;top:0;width:50.500px;height:0"><span class="t" style="left:0.00px;top:422.00px;font-size:11px;right:0;left:auto;">- 30</span></div>
<div style="left:396px;top:0;width:50.500px;height:0"><span class="t" style="left:0.00px;top:401.00px;font-size:11px;right:0;left:auto;">- 20</span></div>
<div style="left:396px;top:0;width:50.500px;height:0"><span class="t" style="left:0.00px;top:379.00px;font-size:11px;right:0;left:auto;">- 10</span></div>
<div style="left:396px;top:0;width:50.500px;height:0"><span class="t" style="left:0.00px;top:358.00px;font-size:11px;right:0;left:auto;">0</span></div>
<div style="left:396px;top:0;width:50.500px;height:0"><span class="t" style="left:0.00px;top:337.00px;font-size:11px;right:0;left:auto;">10</span></div>
<div style="left:396px;top:0;width:50.500px;height:0"><span class="t" style="left:0.00px;top:316.00px;font-size:11px;right:0;left:auto;">20</span></div>
<div style="left:396px;top:0;width:50.500px;height:0"><span class="t" style="left:0.00px;top:294.00px;font-size:11px;right:0;left:auto;">30</span></div>
<div style="left:396px;top:0;width:50.500px;height:0"><span class="t" style="left:0.00px;top:273.00px;font-size:11px;right:0;left:auto;">40</span></div>
<div style="left:396px;top:0;width:50.500px;height:0"><span class="t" style="left:0.00px;top:252.00px;font-size:11px;right:0;left:auto;">50</span></div>
<div style="left:396px;top:0;width:50.500px;height:0"><span class="t" style="left:0.00px;top:230.00px;font-size:11px;right:0;left:auto;">60</span></div>
<div style="left:396px;top:0;width:50.500px;height:0"><span class="t" style="left:0.00px;top:209.00px;font-size:11px;right:0;left:auto;">70</span></div>
<div style="left:396px;top:0;width:50.500px;height:0"><span class="t" style="left:0.00px;top:188.00px;font-size:11px;right:0;left:auto;">80</span></div>
<div style="left:396px;top:0;width:50.500px;height:0"><span class="t" style="left:0.00px;top:167.00px;font-size:11px;right:0;left:auto;">90</span></div>
<div style="left:454.0px;top:583.500px;width:0;height:0;transform:rotate(-90deg);transform-origin:0 0"><span class="t" style="left:0.00px;top:-5.00px;font-size:11px;right:0;left:auto;">-6,75</span></div>
<div style="left:532.3px;top:583.500px;width:0;height:0;transform:rotate(-90deg);transform-origin:0 0"><span class="t" style="left:0.00px;top:-5.00px;font-size:11px;right:0;left:auto;">-1,5</span></div>
<div style="left:610.6px;top:583.500px;width:0;height:0;transform:rotate(-90deg);transform-origin:0 0"><span class="t" style="left:0.00px;top:-5.00px;font-size:11px;right:0;left:auto;">1,5</span></div>
<div style="left:688.9px;top:583.500px;width:0;height:0;transform:rotate(-90deg);transform-origin:0 0"><span class="t" style="left:0.00px;top:-5.00px;font-size:11px;right:0;left:auto;">3</span></div>
<div style="left:767.1px;top:583.500px;width:0;height:0;transform:rotate(-90deg);transform-origin:0 0"><span class="t" style="left:0.00px;top:-5.00px;font-size:11px;right:0;left:auto;">4,5</span></div>
<div style="left:845.4px;top:583.500px;width:0;height:0;transform:rotate(-90deg);transform-origin:0 0"><span class="t" style="left:0.00px;top:-5.00px;font-size:11px;right:0;left:auto;">6</span></div>
<div style="left:923.7px;top:583.500px;width:0;height:0;transform:rotate(-90deg);transform-origin:0 0"><span class="t" style="left:0.00px;top:-5.00px;font-size:11px;right:0;left:auto;">7,5</span></div>
<div style="left:1002.0px;top:583.500px;width:0;height:0;transform:rotate(-90deg);transform-origin:0 0"><span class="t" style="left:0.00px;top:-5.00px;font-size:11px;right:0;left:auto;">8,25</span></div>
<div style="left:391px;top:116px;width:621px;height:537px;overflow:hidden"><div style="left:63.0px;top:-116px;width:0;height:0"><span class="t" style="left:0.00px;top:558.00px;font-size:9.6px;color:#7c0000;letter-spacing:-0.274px;transform:translateX(-50%);-webkit-text-stroke:.15px #7c0000;">-100,00</span></div><div style="left:141.3px;top:-116px;width:0;height:0"><span class="t" style="left:0.00px;top:450.00px;font-size:9.6px;color:#7c0000;letter-spacing:-0.261px;transform:translateX(-50%);-webkit-text-stroke:.15px #7c0000;">-49,22</span></div><div style="left:219.6px;top:-116px;width:0;height:0"><span class="t" style="left:0.00px;top:358.00px;font-size:9.6px;color:#7c0000;letter-spacing:-0.244px;transform:translateX(-50%);-webkit-text-stroke:.15px #7c0000;">-6,25</span></div><div style="left:297.9px;top:-116px;width:0;height:0"><span class="t" style="left:0.00px;top:304.00px;font-size:9.6px;color:#7c0000;letter-spacing:-0.279px;transform:translateX(-50%);-webkit-text-stroke:.15px #7c0000;">19,53</span></div><div style="left:376.1px;top:-116px;width:0;height:0"><span class="t" style="left:0.00px;top:245.00px;font-size:9.6px;color:#7c0000;letter-spacing:-0.279px;transform:translateX(-50%);-webkit-text-stroke:.15px #7c0000;">46,88</span></div><div style="left:454.4px;top:-116px;width:0;height:0"><span class="t" style="left:0.00px;top:199.00px;font-size:9.6px;color:#7c0000;letter-spacing:-0.279px;transform:translateX(-50%);-webkit-text-stroke:.15px #7c0000;">68,75</span></div><div style="left:532.7px;top:-116px;width:0;height:0"><span class="t" style="left:0.00px;top:149.00px;font-size:9.6px;color:#7c0000;letter-spacing:-0.279px;transform:translateX(-50%);-webkit-text-stroke:.15px #7c0000;">92,19</span></div><div style="left:611.0px;top:-116px;width:0;height:0"><span class="t" style="left:0.00px;top:134.00px;font-size:9.6px;color:#7c0000;letter-spacing:-0.279px;transform:translateX(-50%);-webkit-text-stroke:.15px #7c0000;">99,22</span></div></div>
<div style="left:702.500px;top:0;width:0;height:0"><span class="t" style="left:0.00px;top:133.00px;font-size:11px;font-weight:bold;letter-spacing:0.311px;transform:translateX(-50%);">Скорость вентилятора при превышении температур</span></div>
<div style="left:727.500px;top:0;width:0;height:0"><span class="t" style="left:0.00px;top:626.00px;font-size:11px;font-weight:bold;letter-spacing:0.450px;transform:translateX(-50%);">Дельта температур, град.С</span></div>
<div style="left:411px;top:365px;width:0;height:0;transform:rotate(-90deg);transform-origin:0 0"><span class="t" style="left:0.00px;top:-5.00px;font-size:11px;font-weight:bold;letter-spacing:0.587px;transform:translateX(-50%);">Скорость вентилятора, %</span></div>
<div style="left:394px;top:653px;width:618px;height:84px;background:linear-gradient(180deg,#cbddf9 0,#bdd2f5 25px,#a6c2ef 55px,#8fb2e8 84px)"></div>
<div style="left:397px;top:656px;width:173px;height:78px;border-left:1px solid #8e8e8e;border-top:1px solid #8e8e8e;border-right:1px solid #fff;border-bottom:1px solid #fff"></div>
<div style="left:573px;top:656px;width:189px;height:78px;border-left:1px solid #8e8e8e;border-top:1px solid #8e8e8e;border-right:1px solid #fff;border-bottom:1px solid #fff"></div>
<div style="left:765px;top:656px;width:182px;height:78px;border-left:1px solid #8e8e8e;border-top:1px solid #8e8e8e;border-right:1px solid #fff;border-bottom:1px solid #fff"></div>
<div style="left:950px;top:656px;width:34px;height:78px;border-left:1px solid #8e8e8e;border-top:1px solid #8e8e8e;border-right:1px solid #fff;border-bottom:1px solid #fff"></div>
<div style="left:404px;top:665px;width:16px;height:16px;border-radius:2px;background:linear-gradient(135deg,#5cc25a 0,#2f9a2e 45%,#1c8a1e 100%);border:1px solid #f0f6f0;box-shadow:inset 0 0 0 1px #2a8f2a"></div>
<svg style="left:406px;top:668px" width="12" height="10" viewBox="0 0 12 10"><path d="M1 5H10M6 1L10 5L6 9" fill="none" stroke="#fff" stroke-width="2"/></svg>
<div style="left:404px;top:687px;width:16px;height:16px;border-radius:2px;background:linear-gradient(135deg,#5cc25a 0,#2f9a2e 45%,#1c8a1e 100%);border:1px solid #f0f6f0;box-shadow:inset 0 0 0 1px #2a8f2a"></div>
<svg style="left:406px;top:690px" width="12" height="10" viewBox="0 0 12 10"><path d="M1 5H10M6 1L10 5L6 9" fill="none" stroke="#fff" stroke-width="2"/></svg>
<span class="t" style="left:423.30px;top:668.00px;font-size:11px;letter-spacing:0.260px;">Установить в</span>
<span class="t" style="left:422.80px;top:690.00px;font-size:11px;letter-spacing:-0.117px;">Изменить на</span>
<div style="left:406px;top:710px;width:13px;height:13px;border:1px solid #8e8f8f;background:linear-gradient(135deg,#d6d7d8 0,#eeeeee 50%,#fdfdfd 100%);box-shadow:inset 0 0 0 1px #f4f4f4,inset 0 0 0 2px #c4c6c8"></div>
<div style="left:432px;top:710px;width:13px;height:13px;border:1px solid #8e8f8f;background:linear-gradient(135deg,#d6d7d8 0,#eeeeee 50%,#fdfdfd 100%);box-shadow:inset 0 0 0 1px #f4f4f4,inset 0 0 0 2px #c4c6c8"></div>
<span class="t" style="left:419.30px;top:712.00px;font-size:11px;">%</span>
<span class="t" style="left:446.90px;top:712.00px;font-size:11px;letter-spacing:0.466px;">относит.</span>
<div style="left:498px;top:661px;width:64px;height:21px;background:#fff;border:1px solid #e3ecf8"></div>
<span class="t" style="left:500.00px;top:666.00px;font-size:11px;letter-spacing:0.292px;">0,000</span>
<div style="left:547px;top:663px;width:13px;height:9px;border:1px solid #a8b0bc;background:linear-gradient(180deg,#f6f6f6,#dedede);border-radius:1px"></div>
<div style="left:547px;top:672px;width:13px;height:9px;border:1px solid #a8b0bc;background:linear-gradient(180deg,#f6f6f6,#dedede);border-radius:1px"></div>
<svg style="left:550px;top:666px" width="7" height="3.500" viewBox="0 0 7 3.500"><path d="M0 3.500L3.500 0L7 3.500Z" fill="#5a6cb0"/></svg>
<svg style="left:550px;top:675px" width="7" height="3.500" viewBox="0 0 7 3.500"><path d="M0 0L3.500 3.500L7 0Z" fill="#5a6cb0"/></svg>
<div style="left:498px;top:684px;width:64px;height:20px;background:#fff;border:1px solid #e3ecf8"></div>
<span class="t" style="left:500.00px;top:688.00px;font-size:11px;letter-spacing:0.292px;">0,000</span>
<div style="left:547px;top:685px;width:13px;height:9px;border:1px solid #a8b0bc;background:linear-gradient(180deg,#f6f6f6,#dedede);border-radius:1px"></div>
<div style="left:547px;top:694px;width:13px;height:9px;border:1px solid #a8b0bc;background:linear-gradient(180deg,#f6f6f6,#dedede);border-radius:1px"></div>
<svg style="left:550px;top:688px" width="7" height="3.500" viewBox="0 0 7 3.500"><path d="M0 3.500L3.500 0L7 3.500Z" fill="#5a6cb0"/></svg>
<svg style="left:550px;top:697px" width="7" height="3.500" viewBox="0 0 7 3.500"><path d="M0 0L3.500 3.500L7 0Z" fill="#5a6cb0"/></svg>
<div style="left:498px;top:706px;width:64px;height:20px;background:#fff;border:1px solid #e3ecf8"></div>
<span class="t" style="left:500.00px;top:710.00px;font-size:11px;letter-spacing:0.292px;">0,000</span>
<div style="left:547px;top:707px;width:13px;height:9px;border:1px solid #a8b0bc;background:linear-gradient(180deg,#f6f6f6,#dedede);border-radius:1px"></div>
<div style="left:547px;top:716px;width:13px;height:9px;border:1px solid #a8b0bc;background:linear-gradient(180deg,#f6f6f6,#dedede);border-radius:1px"></div>
<svg style="left:550px;top:710px" width="7" height="3.500" viewBox="0 0 7 3.500"><path d="M0 3.500L3.500 0L7 3.500Z" fill="#5a6cb0"/></svg>
<svg style="left:550px;top:719px" width="7" height="3.500" viewBox="0 0 7 3.500"><path d="M0 0L3.500 3.500L7 0Z" fill="#5a6cb0"/></svg>
<div style="left:581px;top:673px;width:82px;height:12px;background:#e6e9ea;border-top:1px solid #c4ccd6;border-bottom:1px solid #f4f6f8"></div>
<svg style="left:581px;top:672px" width="8" height="15" viewBox="0 0 8 15"><path d="M1.500 .5H6.500Q7.500 .5 7.500 1.500V10.500Q7.500 12 4 14.300Q.5 12 .5 10.500V1.500Q.5 .5 1.500 .5Z" fill="url(#gBtn)" stroke="#868c94" stroke-width="1"/></svg>
<div style="left:581px;top:701px;width:82px;height:12px;background:#e6e9ea;border-top:1px solid #c4ccd6;border-bottom:1px solid #f4f6f8"></div>
<svg style="left:613px;top:700px" width="8" height="15" viewBox="0 0 8 15"><path d="M1.500 .5H6.500Q7.500 .5 7.500 1.500V10.500Q7.500 12 4 14.300Q.5 12 .5 10.500V1.500Q.5 .5 1.500 .5Z" fill="url(#gBtn)" stroke="#868c94" stroke-width="1"/></svg>
<div style="left:671px;top:662px;width:83px;height:67px;border:1px solid #707070;border-radius:3px;background:linear-gradient(180deg,#f4f4f4 0,#ececec 48%,#dedede 52%,#d0d0d0 100%);box-shadow:inset 0 0 0 1px #fcfcfc"></div>
<svg style="left:677px;top:666px" width="72" height="58" viewBox="0 0 72 58" shape-rendering="crispEdges"><rect x=".5" y=".5" width="71" height="57" fill="#fff" stroke="#606060"/><path d="M7.6 0V58" stroke="#7c7c7c" stroke-width="1"/><path d="M14.7 0V58" stroke="#7c7c7c" stroke-width="1"/><path d="M21.8 0V58" stroke="#7c7c7c" stroke-width="1"/><path d="M28.9 0V58" stroke="#7c7c7c" stroke-width="1"/><path d="M36.0 0V58" stroke="#7c7c7c" stroke-width="1"/><path d="M43.1 0V58" stroke="#7c7c7c" stroke-width="1"/><path d="M50.2 0V58" stroke="#7c7c7c" stroke-width="1"/><path d="M57.3 0V58" stroke="#7c7c7c" stroke-width="1"/><path d="M64.4 0V58" stroke="#7c7c7c" stroke-width="1"/><path d="M0 8.6H72" stroke="#7c7c7c" stroke-width="1"/><path d="M0 16.8H72" stroke="#7c7c7c" stroke-width="1"/><path d="M0 24.9H72" stroke="#7c7c7c" stroke-width="1"/><path d="M0 33.1H72" stroke="#7c7c7c" stroke-width="1"/><path d="M0 41.2H72" stroke="#7c7c7c" stroke-width="1"/><path d="M0 49.3H72" stroke="#7c7c7c" stroke-width="1"/></svg>
<svg style="left:677px;top:666px" width="72" height="58" viewBox="0 0 72 58"><path d="M4.400 5.200H20C28 5.300 32 8 35.600 10.200C40 13 43 16 46.300 19.800C50 24 53 27 56 29.500C59 34 61 38 63.500 43.500L67.800 53.800" fill="none" stroke="#0a1ee0" stroke-width="1.100"/><path d="M4.400 54.200H16.200C24 54 30 51.500 35.600 48.800C40 46 43 43 46.300 39.200C50 35 53 32 56 29.500C59 25 61 20 63.500 14.500L67.800 5.900" fill="none" stroke="#f01010" stroke-width="1.100"/></svg>
<div style="left:770px;top:665px;width:13px;height:13px;border:1px solid #b2b4b6;background:linear-gradient(135deg,#ececec 0,#f6f6f6 60%,#fbfbfb 100%);box-shadow:inset 0 0 0 1px #f8f8f8"></div>
<svg style="left:773px;top:667px" width="9" height="9" viewBox="0 0 9 9"><path d="M.8 4.800L3 7.600L7.500 .8" fill="none" stroke="#b4b6ba" stroke-width="1.500"/></svg>
<span class="t" style="left:788.70px;top:667.00px;font-size:11px;letter-spacing:0.145px;">2D - отображать все точки</span>
<div style="left:770px;top:681px;width:13px;height:13px;border:1px solid #b2b4b6;background:linear-gradient(135deg,#ececec 0,#f6f6f6 60%,#fbfbfb 100%);box-shadow:inset 0 0 0 1px #f8f8f8"></div>
<span class="t" style="left:788.70px;top:683.00px;font-size:11px;letter-spacing:-0.091px;">3D - следить за мышью</span>
<div style="left:770px;top:697px;width:13px;height:13px;border:1px solid #b2b4b6;background:linear-gradient(135deg,#ececec 0,#f6f6f6 60%,#fbfbfb 100%);box-shadow:inset 0 0 0 1px #f8f8f8"></div>
<span class="t" style="left:788.70px;top:699.00px;font-size:11px;letter-spacing:-0.018px;">3D - изм. соседние точки</span>
<div style="left:770px;top:714px;width:13px;height:12px;border:1px solid #c2c8d2;border-radius:3px;background:#f6f7f9"></div>
<span class="t" style="left:789.70px;top:716.00px;font-size:11px;color:#fff;letter-spacing:-0.164px;">2D - отменить ZOOM</span>
<span class="t" style="left:788.70px;top:715.00px;font-size:11px;color:#9aa8c4;letter-spacing:-0.164px;">2D - отменить ZOOM</span>
<div style="left:922px;top:696px;width:22px;height:20px;border:1px solid #8c8c8c;background:#c2c2c2"></div>
<svg style="left:924px;top:699px" width="16" height="14" viewBox="0 0 16 14" shape-rendering="crispEdges"><rect x="0" y="0" width="16" height="14" fill="#1450c8"/><rect x="1.5" y="2.0" width="2.5" height="2.500" fill="#fff"/><rect x="1.5" y="6.2" width="2.5" height="2.500" fill="#fff"/><rect x="1.5" y="10.4" width="2.5" height="2.500" fill="#fff"/><rect x="5.5" y="2.0" width="2.5" height="2.500" fill="#fff"/><rect x="5.5" y="6.2" width="2.5" height="2.500" fill="#fff"/><rect x="5.5" y="10.4" width="2.5" height="2.500" fill="#fff"/><rect x="9.5" y="2.0" width="2.5" height="2.500" fill="#fff"/><rect x="9.5" y="6.2" width="2.5" height="2.500" fill="#fff"/><rect x="9.5" y="10.4" width="2.5" height="2.500" fill="#fff"/><rect x="13.5" y="2.0" width="2" height="2.500" fill="#fff"/><rect x="13.5" y="6.2" width="2" height="2.500" fill="#fff"/><rect x="13.5" y="10.4" width="2" height="2.500" fill="#fff"/></svg>
<div style="left:957px;top:670px;width:20px;height:20px;border:1px solid #707070;border-radius:3px;background:linear-gradient(180deg,#f4f4f4 0,#ececec 48%,#dedede 52%,#d0d0d0 100%);box-shadow:inset 0 0 0 1px #fcfcfc"></div>
<span class="t" style="left:962.80px;top:676.00px;font-size:11px;">X</span>
<div style="left:957px;top:702px;width:20px;height:20px;border:1px solid #b8bcc4;border-radius:3px;background:#f4f4f4"></div>
<span class="t" style="left:963.50px;top:708.00px;font-size:11px;color:#8088a0;">Z</span>
</body></html>
